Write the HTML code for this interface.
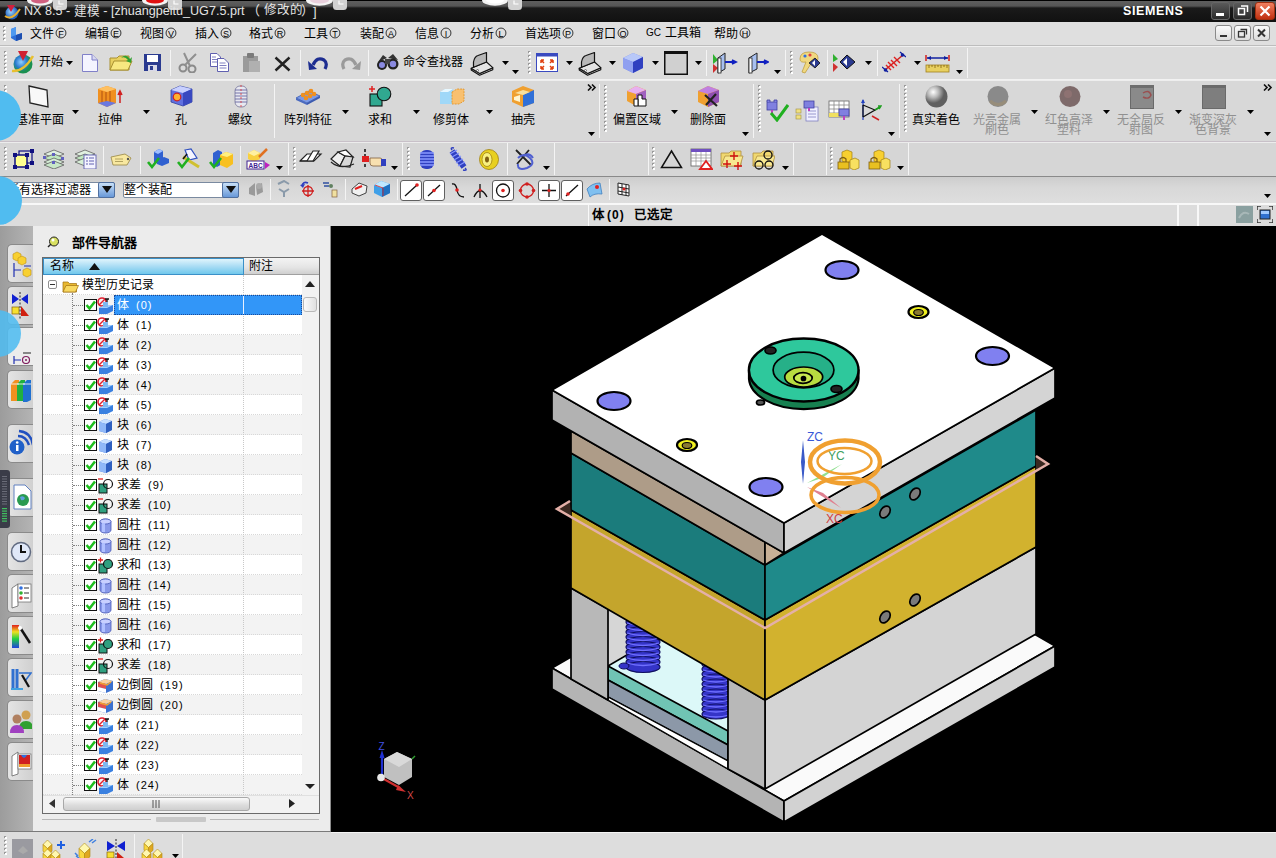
<!DOCTYPE html>
<html lang="zh-CN"><head><meta charset="utf-8"><style>
*{margin:0;padding:0;box-sizing:border-box}
html,body{width:1276px;height:858px;overflow:hidden;background:#d8d8d8;font-family:"Liberation Sans",sans-serif;font-size:12px;color:#000}
.a{position:absolute}
.t{white-space:nowrap;line-height:1}
</style></head><body>
<div class="a" style="left:0;top:0;width:1276px;height:22px;background:linear-gradient(#000 0,#000 1px,#5e5e5e 1px,#555 6px,#1a1a1a 8px,#111 100%)"></div>
<svg class="a" style="left:27px;top:0px" width="41" height="11" viewBox="0 0 41 11"><ellipse cx="13.0" cy="0" rx="13.0" ry="5.8" fill="#f4f4f4"/><ellipse cx="13.0" cy="0" rx="9.0" ry="3.6" fill="#d06080"/><rect x="26" y="-4" width="14" height="14" rx="3.5" fill="#d2d2d2"/><path d="M32,0.5 v3.5 h4.5" stroke="#fff" stroke-width="1.2" fill="none"/></svg>
<svg class="a" style="left:142px;top:0px" width="41" height="11" viewBox="0 0 41 11"><ellipse cx="13.0" cy="0" rx="13.0" ry="5.8" fill="#f4f4f4"/><ellipse cx="13.0" cy="0" rx="9.0" ry="3.6" fill="#e01010"/><rect x="26" y="-4" width="14" height="14" rx="3.5" fill="#d2d2d2"/><path d="M32,0.5 v3.5 h4.5" stroke="#fff" stroke-width="1.2" fill="none"/></svg>
<svg class="a" style="left:306px;top:0px" width="42" height="11" viewBox="0 0 42 11"><ellipse cx="13.5" cy="0" rx="13.5" ry="5.8" fill="#f4f4f4"/><ellipse cx="13.5" cy="0" rx="9.5" ry="3.6" fill="#e8d0dc"/><rect x="27" y="-4" width="14" height="14" rx="3.5" fill="#d2d2d2"/><path d="M33,0.5 v3.5 h4.5" stroke="#fff" stroke-width="1.2" fill="none"/></svg>
<svg class="a" style="left:482px;top:0px" width="41" height="11" viewBox="0 0 41 11"><ellipse cx="13.0" cy="0" rx="13.0" ry="5.8" fill="#f4f4f4"/><ellipse cx="13.0" cy="0" rx="9.0" ry="3.6" fill="#ffffff"/><rect x="26" y="-4" width="14" height="14" rx="3.5" fill="#d2d2d2"/><path d="M32,0.5 v3.5 h4.5" stroke="#fff" stroke-width="1.2" fill="none"/></svg>
<svg class="a" style="left:3px;top:3px" width="18" height="17" viewBox="0 0 18 17"><defs><radialGradient id="gnx" cx="40%" cy="40%"><stop offset="0" stop-color="#9fd8ff"/><stop offset="1" stop-color="#1d5fc0"/></radialGradient></defs><circle cx="9" cy="10" r="6.5" fill="url(#gnx)"/><path d="M2,13 Q9,18 17,6" stroke="#e8b030" stroke-width="2" fill="none"/><path d="M4,2 L12,2 L8,9 Z" fill="#d02040"/></svg>
<div class="a t" style="left:24px;top:5px;font-size:12.6px;color:#e4e4e4;">NX 8.5 - 建模 - [zhuangpeitu_UG7.5.prt</div>
<div class="a t" style="left:247px;top:4px;font-size:13px;color:#e4e4e4;">（</div>
<div class="a t" style="left:264px;top:4px;font-size:12.5px;color:#e4e4e4;">修改的</div>
<div class="a t" style="left:301px;top:4px;font-size:13px;color:#e4e4e4;">）</div>
<div class="a t" style="left:313px;top:5px;font-size:13px;color:#e4e4e4;">]</div>
<div class="a t" style="left:1123px;top:5px;font-size:12px;color:#ffffff;font-weight:bold;letter-spacing:0.6px;font-size:12.5px">SIEMENS</div>
<div class="a" style="left:1211px;top:2px;width:19px;height:18px;border-radius:3px;background:linear-gradient(#5a5a5a,#2a2a2a);border:1px solid #666"></div>
<div class="a" style="left:1216px;top:13px;width:8px;height:3px;background:#fff"></div>
<div class="a" style="left:1233px;top:2px;width:19px;height:18px;border-radius:3px;background:linear-gradient(#5a5a5a,#2a2a2a);border:1px solid #666"></div>
<svg class="a" style="left:1237px;top:5px" width="12" height="11" viewBox="0 0 12 11"><rect x="1.5" y="3.5" width="6" height="6" fill="none" stroke="#fff" stroke-width="1.5"/><path d="M4,1 H10.5 V7" fill="none" stroke="#fff" stroke-width="1.5"/></svg>
<div class="a" style="left:1255px;top:2px;width:20px;height:18px;border-radius:3px;background:linear-gradient(#f08060,#c03010);border:1px solid #a03010"></div>
<svg class="a" style="left:1259px;top:5px" width="12" height="12" viewBox="0 0 12 12"><path d="M1.5,1.5 L10.5,10.5 M10.5,1.5 L1.5,10.5" stroke="#fff" stroke-width="2.2"/></svg>
<div class="a" style="left:0;top:22px;width:1276px;height:24px;background:#dfdfdf;border-bottom:1px solid #bdbdbd"></div>
<svg class="a" style="left:3px;top:26px" width="3" height="16" viewBox="0 0 3 16"><rect x="0" y="0" width="2" height="2" fill="#9a9a9a"/><rect x="1" y="1" width="2" height="2" fill="#fff"/><rect x="0" y="4" width="2" height="2" fill="#9a9a9a"/><rect x="1" y="5" width="2" height="2" fill="#fff"/><rect x="0" y="8" width="2" height="2" fill="#9a9a9a"/><rect x="1" y="9" width="2" height="2" fill="#fff"/><rect x="0" y="12" width="2" height="2" fill="#9a9a9a"/><rect x="1" y="13" width="2" height="2" fill="#fff"/></svg>
<svg class="a" style="left:8px;top:25px" width="17" height="17" viewBox="0 0 17 17"><path d="M3,4 L8,2 L8,10 L14,8 L14,14 L8,16 L3,13 Z" fill="#2d6fd8"/><path d="M3,4 L8,2 L8,10 L3,12Z" fill="#4f9af0"/><path d="M8,10 L14,8 L14,14 L8,16Z" fill="#1d4fb0"/></svg>
<div class="a t" style="left:30px;top:27px;font-size:12px">文件<span style="font-size:10px;margin-left:1px;display:inline-block;border:1px solid #222;border-radius:6px;width:12px;height:12px;line-height:11px;text-align:center;vertical-align:1px;transform:scale(0.9)">F</span></div>
<div class="a t" style="left:85px;top:27px;font-size:12px">编辑<span style="font-size:10px;margin-left:1px;display:inline-block;border:1px solid #222;border-radius:6px;width:12px;height:12px;line-height:11px;text-align:center;vertical-align:1px;transform:scale(0.9)">E</span></div>
<div class="a t" style="left:140px;top:27px;font-size:12px">视图<span style="font-size:10px;margin-left:1px;display:inline-block;border:1px solid #222;border-radius:6px;width:12px;height:12px;line-height:11px;text-align:center;vertical-align:1px;transform:scale(0.9)">V</span></div>
<div class="a t" style="left:195px;top:27px;font-size:12px">插入<span style="font-size:10px;margin-left:1px;display:inline-block;border:1px solid #222;border-radius:6px;width:12px;height:12px;line-height:11px;text-align:center;vertical-align:1px;transform:scale(0.9)">S</span></div>
<div class="a t" style="left:249px;top:27px;font-size:12px">格式<span style="font-size:10px;margin-left:1px;display:inline-block;border:1px solid #222;border-radius:6px;width:12px;height:12px;line-height:11px;text-align:center;vertical-align:1px;transform:scale(0.9)">R</span></div>
<div class="a t" style="left:304px;top:27px;font-size:12px">工具<span style="font-size:10px;margin-left:1px;display:inline-block;border:1px solid #222;border-radius:6px;width:12px;height:12px;line-height:11px;text-align:center;vertical-align:1px;transform:scale(0.9)">T</span></div>
<div class="a t" style="left:360px;top:27px;font-size:12px">装配<span style="font-size:10px;margin-left:1px;display:inline-block;border:1px solid #222;border-radius:6px;width:12px;height:12px;line-height:11px;text-align:center;vertical-align:1px;transform:scale(0.9)">A</span></div>
<div class="a t" style="left:415px;top:27px;font-size:12px">信息<span style="font-size:10px;margin-left:1px;display:inline-block;border:1px solid #222;border-radius:6px;width:12px;height:12px;line-height:11px;text-align:center;vertical-align:1px;transform:scale(0.9)">I</span></div>
<div class="a t" style="left:470px;top:27px;font-size:12px">分析<span style="font-size:10px;margin-left:1px;display:inline-block;border:1px solid #222;border-radius:6px;width:12px;height:12px;line-height:11px;text-align:center;vertical-align:1px;transform:scale(0.9)">L</span></div>
<div class="a t" style="left:525px;top:27px;font-size:12px">首选项<span style="font-size:10px;margin-left:1px;display:inline-block;border:1px solid #222;border-radius:6px;width:12px;height:12px;line-height:11px;text-align:center;vertical-align:1px;transform:scale(0.9)">P</span></div>
<div class="a t" style="left:592px;top:27px;font-size:12px">窗口<span style="font-size:10px;margin-left:1px;display:inline-block;border:1px solid #222;border-radius:6px;width:12px;height:12px;line-height:11px;text-align:center;vertical-align:1px;transform:scale(0.9)">O</span></div>
<div class="a t" style="left:646px;top:28px;font-size:10px;color:#000;">GC</div>
<div class="a t" style="left:665px;top:27px;font-size:12px;color:#000;">工具箱</div>
<div class="a t" style="left:714px;top:27px;font-size:12px">帮助<span style="font-size:10px;margin-left:1px;display:inline-block;border:1px solid #222;border-radius:6px;width:12px;height:12px;line-height:11px;text-align:center;vertical-align:1px;transform:scale(0.9)">H</span></div>
<div class="a" style="left:1215px;top:25px;width:17px;height:16px;border-radius:3px;background:linear-gradient(#fbfbfb,#dcdcdc);border:1px solid #8a8a8a"></div>
<div class="a" style="left:1234px;top:25px;width:17px;height:16px;border-radius:3px;background:linear-gradient(#fbfbfb,#dcdcdc);border:1px solid #8a8a8a"></div>
<div class="a" style="left:1253px;top:25px;width:17px;height:16px;border-radius:3px;background:linear-gradient(#fbfbfb,#dcdcdc);border:1px solid #8a8a8a"></div>
<svg class="a" style="left:1218px;top:28px" width="12" height="11" viewBox="0 0 12 11"><rect x="2" y="7" width="7" height="2" fill="#333"/></svg>
<svg class="a" style="left:1237px;top:28px" width="12" height="11" viewBox="0 0 12 11"><rect x="1.5" y="3.5" width="6" height="5.5" fill="none" stroke="#333" stroke-width="1.3"/><path d="M3.5,1.5 H9.5 V6.5" fill="none" stroke="#333" stroke-width="1.3"/></svg>
<svg class="a" style="left:1256px;top:28px" width="12" height="11" viewBox="0 0 12 11"><path d="M2,1.5 L9,8.5 M9,1.5 L2,8.5" stroke="#333" stroke-width="2"/></svg>
<div class="a" style="left:0;top:46px;width:1276px;height:34px;background:#dbdbdb;border-top:1px solid #f0f0f0;border-bottom:1px solid #f2f2f2"></div>
<svg class="a" style="left:4px;top:51px" width="3" height="26" viewBox="0 0 3 26"><rect x="0" y="0" width="2" height="2" fill="#9a9a9a"/><rect x="1" y="1" width="2" height="2" fill="#fff"/><rect x="0" y="4" width="2" height="2" fill="#9a9a9a"/><rect x="1" y="5" width="2" height="2" fill="#fff"/><rect x="0" y="8" width="2" height="2" fill="#9a9a9a"/><rect x="1" y="9" width="2" height="2" fill="#fff"/><rect x="0" y="12" width="2" height="2" fill="#9a9a9a"/><rect x="1" y="13" width="2" height="2" fill="#fff"/><rect x="0" y="16" width="2" height="2" fill="#9a9a9a"/><rect x="1" y="17" width="2" height="2" fill="#fff"/><rect x="0" y="20" width="2" height="2" fill="#9a9a9a"/><rect x="1" y="21" width="2" height="2" fill="#fff"/></svg>
<svg class="a" style="left:10px;top:50px" width="25" height="25" viewBox="0 0 25 25"><defs><radialGradient id="gg" cx="40%" cy="40%"><stop offset="0" stop-color="#8fd0ff"/><stop offset=".6" stop-color="#2a7ad0"/><stop offset="1" stop-color="#1a9050"/></radialGradient></defs><circle cx="13" cy="14" r="9.5" fill="url(#gg)"/><path d="M2,21 Q14,22 23,6" stroke="#e8c030" stroke-width="2.5" fill="none"/><path d="M8,1 L18,1 L13,11 Z" fill="#d02030"/></svg>
<div class="a t" style="left:39px;top:56px;font-size:12px;color:#000;">开始</div>
<svg class="a" style="left:66px;top:61px" width="7" height="4" viewBox="0 0 7 4"><path d="M0,0 L7,0 L3.5,4 Z" fill="#000"/></svg>
<svg class="a" style="left:81px;top:53px" width="18" height="20" viewBox="0 0 18 20"><path d="M1.5,1.5 H11 L16.5,7 V18.5 H1.5 Z" fill="#f4f4ff" stroke="#8080c8"/><path d="M11,1.5 V7 H16.5" fill="#d8d8f0" stroke="#8080c8"/></svg>
<svg class="a" style="left:109px;top:52px" width="24" height="21" viewBox="0 0 24 21"><path d="M1,6 H8 L10,4 H20 V18 H1 Z" fill="#e8d060" stroke="#a89030"/><path d="M1,18 L5,9 H23 L19,18 Z" fill="#f8e880" stroke="#a89030"/><path d="M12,6 Q17,1 21,7 L23,5 L22,11 L17,9 L19,8 Q16,4 12,6Z" fill="#30a030"/></svg>
<svg class="a" style="left:143px;top:53px" width="19" height="19" viewBox="0 0 19 19"><rect x="1" y="1" width="17" height="17" fill="#2a3a90"/><rect x="4" y="2" width="11" height="7" fill="#fff"/><rect x="5" y="12" width="9" height="6" fill="#d8d8e8"/><rect x="7" y="13" width="3" height="4" fill="#2a3a90"/></svg>
<div class="a" style="left:170px;top:50px;width:1px;height:26px;background:#b0b0b0;border-right:1px solid #f4f4f4"></div>
<svg class="a" style="left:178px;top:52px" width="23" height="21" viewBox="0 0 23 21"><circle cx="5" cy="16" r="3.5" fill="none" stroke="#8a8a8a" stroke-width="2"/><circle cx="14" cy="17" r="3.5" fill="none" stroke="#8a8a8a" stroke-width="2"/><path d="M7,13 L18,2 M12,14 L6,1" stroke="#909090" stroke-width="2"/></svg>
<svg class="a" style="left:209px;top:52px" width="22" height="21" viewBox="0 0 22 21"><path d="M1.5,1.5 H8 L11.5,5 V14.5 H1.5Z" fill="#fff" stroke="#6060b0"/><path d="M8.5,6.5 H15 L19.5,11 V19.5 H8.5Z" fill="#fff" stroke="#6060b0"/><path d="M10.5,11 h6 M10.5,13.5 h7 M10.5,16 h7 M3,5 h4 M3,7.5 h5 M3,10 h5" stroke="#6060b0" stroke-width="0.8"/></svg>
<svg class="a" style="left:241px;top:52px" width="21" height="21" viewBox="0 0 21 21"><rect x="2" y="4" width="15" height="16" fill="#9a9a9a"/><rect x="6" y="1" width="7" height="5" rx="1" fill="#7a7a7a"/><rect x="8" y="9" width="11" height="11" fill="#b0b0b0"/></svg>
<svg class="a" style="left:274px;top:56px" width="17" height="16" viewBox="0 0 17 16"><path d="M1.5,1.5 L15.5,14.5 M15.5,1.5 L1.5,14.5" stroke="#222" stroke-width="2.4"/></svg>
<div class="a" style="left:300px;top:50px;width:1px;height:26px;background:#b0b0b0;border-right:1px solid #f4f4f4"></div>
<svg class="a" style="left:308px;top:56px" width="21" height="15" viewBox="0 0 21 15"><path d="M5,9 Q9,0 16,4 Q20,7 17,13" stroke="#1d2d90" stroke-width="3.2" fill="none"/><path d="M0,5 L9,13 L1,14 Z" fill="#1d2d90"/></svg>
<svg class="a" style="left:340px;top:56px" width="21" height="15" viewBox="0 0 21 15"><path d="M16,9 Q12,0 5,4 Q1,7 4,13" stroke="#9a9a9a" stroke-width="3.2" fill="none"/><path d="M21,5 L12,13 L20,14 Z" fill="#9a9a9a"/></svg>
<div class="a" style="left:368px;top:50px;width:1px;height:26px;background:#b0b0b0;border-right:1px solid #f4f4f4"></div>
<svg class="a" style="left:376px;top:52px" width="23" height="20" viewBox="0 0 23 20"><path d="M2,10 L7,3 L11,6 Z M12,6 L17,2 L22,8" fill="#333"/><circle cx="6" cy="13" r="5" fill="#222"/><circle cx="17" cy="12" r="5.5" fill="#222"/><circle cx="6" cy="13" r="3" fill="#8a8ae0"/><circle cx="17" cy="12" r="3.2" fill="#8a8ae0"/><rect x="9" y="7" width="5" height="5" fill="#444"/></svg>
<div class="a t" style="left:403px;top:56px;font-size:12px;color:#000;">命令查找器</div>
<svg class="a" style="left:470px;top:51px" width="25" height="25" viewBox="0 0 25 25"><path d="M1.2,17.2 L9.6,22.4 L22.8,16.7 L22.8,18.7 L9.6,24.2 L1.2,19 Z" fill="#c8c8c8" stroke="#111" stroke-width="1.1" stroke-linejoin="round"/><path d="M1.2,17.2 L3.5,16.3 L16.5,11 L22.8,16.7 L9.6,22.4 Z" fill="#e4e4e4" stroke="#111" stroke-width="1.1" stroke-linejoin="round"/><path d="M16.5,1.5 L16.5,11 L3.5,16.3 L3.5,11 Q4.5,5.5 8,4.5 Z" fill="#b8b8b8" stroke="#111" stroke-width="1.2" stroke-linejoin="round"/><circle cx="7.5" cy="19.5" r="1" fill="#fff" stroke="#333" stroke-width="0.6"/></svg>
<svg class="a" style="left:502px;top:61px" width="7" height="4" viewBox="0 0 7 4"><path d="M0,0 L7,0 L3.5,4 Z" fill="#000"/></svg>
<svg class="a" style="left:512px;top:70px" width="7" height="4" viewBox="0 0 7 4"><path d="M0,0 L7,0 L3.5,4 Z" fill="#000"/></svg>
<svg class="a" style="left:528px;top:51px" width="3" height="26" viewBox="0 0 3 26"><rect x="0" y="0" width="2" height="2" fill="#9a9a9a"/><rect x="1" y="1" width="2" height="2" fill="#fff"/><rect x="0" y="4" width="2" height="2" fill="#9a9a9a"/><rect x="1" y="5" width="2" height="2" fill="#fff"/><rect x="0" y="8" width="2" height="2" fill="#9a9a9a"/><rect x="1" y="9" width="2" height="2" fill="#fff"/><rect x="0" y="12" width="2" height="2" fill="#9a9a9a"/><rect x="1" y="13" width="2" height="2" fill="#fff"/><rect x="0" y="16" width="2" height="2" fill="#9a9a9a"/><rect x="1" y="17" width="2" height="2" fill="#fff"/><rect x="0" y="20" width="2" height="2" fill="#9a9a9a"/><rect x="1" y="21" width="2" height="2" fill="#fff"/></svg>
<svg class="a" style="left:536px;top:53px" width="22" height="19" viewBox="0 0 22 19"><rect x="0.5" y="0.5" width="21" height="18" fill="#fff" stroke="#3a4ac0"/><rect x="0.5" y="0.5" width="21" height="3" fill="#3a4ac0"/><path d="M5,7 l3,3 M5,7 v3 M5,7 h3 M17,7 l-3,3 M17,7 v3 M17,7 h-3 M5,16 l3,-3 M5,16 v-3 M5,16 h3 M17,16 l-3,-3 M17,16 v-3 M17,16 h-3" stroke="#e04010" stroke-width="1.5"/></svg>
<svg class="a" style="left:566px;top:61px" width="7" height="4" viewBox="0 0 7 4"><path d="M0,0 L7,0 L3.5,4 Z" fill="#000"/></svg>
<svg class="a" style="left:578px;top:51px" width="25" height="25" viewBox="0 0 25 25"><path d="M1.2,17.2 L9.6,22.4 L22.8,16.7 L22.8,18.7 L9.6,24.2 L1.2,19 Z" fill="#c8c8c8" stroke="#111" stroke-width="1.1" stroke-linejoin="round"/><path d="M1.2,17.2 L3.5,16.3 L16.5,11 L22.8,16.7 L9.6,22.4 Z" fill="#e4e4e4" stroke="#111" stroke-width="1.1" stroke-linejoin="round"/><path d="M16.5,1.5 L16.5,11 L3.5,16.3 L3.5,11 Q4.5,5.5 8,4.5 Z" fill="#b8b8b8" stroke="#111" stroke-width="1.2" stroke-linejoin="round"/><circle cx="7.5" cy="19.5" r="1" fill="#fff" stroke="#333" stroke-width="0.6"/></svg>
<svg class="a" style="left:609px;top:61px" width="7" height="4" viewBox="0 0 7 4"><path d="M0,0 L7,0 L3.5,4 Z" fill="#000"/></svg>
<svg class="a" style="left:621px;top:52px" width="24" height="22" viewBox="0 0 24 22"><path d="M2,6 L12,1 L22,5 L22,16 L12,21 L2,16Z" fill="#7a8ae8"/><path d="M2,6 L12,1 L22,5 L12,10Z" fill="#b8c8f8"/><path d="M12,10 L22,5 L22,16 L12,21Z" fill="#3040c0"/><path d="M2,6 L12,10 L12,21 L2,16Z" fill="#90a0f0"/></svg>
<svg class="a" style="left:652px;top:61px" width="7" height="4" viewBox="0 0 7 4"><path d="M0,0 L7,0 L3.5,4 Z" fill="#000"/></svg>
<svg class="a" style="left:664px;top:51px" width="24" height="24" viewBox="0 0 24 24"><rect x="0.75" y="0.75" width="22.5" height="22.5" fill="#d0d0d0" stroke="#111" stroke-width="1.5"/><rect x="0" y="0" width="24" height="3" fill="#111"/></svg>
<svg class="a" style="left:695px;top:61px" width="7" height="4" viewBox="0 0 7 4"><path d="M0,0 L7,0 L3.5,4 Z" fill="#000"/></svg>
<div class="a" style="left:706px;top:50px;width:1px;height:26px;background:#b0b0b0;border-right:1px solid #f4f4f4"></div>
<svg class="a" style="left:712px;top:52px" width="26" height="22" viewBox="0 0 26 22"><path d="M1,2 L6,8 L1,12Z" fill="#30b030"/><path d="M1,12 L6,16 L1,21Z" fill="#d03030"/><path d="M6,6 L13,1 L13,17 L6,21Z" fill="#a8c0f0" stroke="#222" stroke-width="1"/><rect x="6" y="6" width="3" height="15" fill="#fff" stroke="#222" stroke-width="0.8"/><path d="M13,10 H22 M20,8 L24,10 L20,12" stroke="#1020c0" stroke-width="1.8" fill="#1020c0"/></svg>
<svg class="a" style="left:747px;top:52px" width="22" height="22" viewBox="0 0 22 22"><path d="M2,6 L10,1 L10,17 L2,21Z" fill="#a8c0f0" stroke="#222" stroke-width="1"/><rect x="2" y="6" width="3" height="15" fill="#fff" stroke="#222" stroke-width="0.8"/><path d="M10,10 H19 M17,8 L21,10 L17,12" stroke="#1020c0" stroke-width="1.8" fill="#1020c0"/></svg>
<svg class="a" style="left:774px;top:70px" width="7" height="4" viewBox="0 0 7 4"><path d="M0,0 L7,0 L3.5,4 Z" fill="#000"/></svg>
<div class="a" style="left:785px;top:50px;width:1px;height:26px;background:#b0b0b0;border-right:1px solid #f4f4f4"></div>
<svg class="a" style="left:790px;top:51px" width="3" height="26" viewBox="0 0 3 26"><rect x="0" y="0" width="2" height="2" fill="#9a9a9a"/><rect x="1" y="1" width="2" height="2" fill="#fff"/><rect x="0" y="4" width="2" height="2" fill="#9a9a9a"/><rect x="1" y="5" width="2" height="2" fill="#fff"/><rect x="0" y="8" width="2" height="2" fill="#9a9a9a"/><rect x="1" y="9" width="2" height="2" fill="#fff"/><rect x="0" y="12" width="2" height="2" fill="#9a9a9a"/><rect x="1" y="13" width="2" height="2" fill="#fff"/><rect x="0" y="16" width="2" height="2" fill="#9a9a9a"/><rect x="1" y="17" width="2" height="2" fill="#fff"/><rect x="0" y="20" width="2" height="2" fill="#9a9a9a"/><rect x="1" y="21" width="2" height="2" fill="#fff"/></svg>
<svg class="a" style="left:797px;top:51px" width="23" height="23" viewBox="0 0 23 23"><path d="M3,8 Q3,1 12,1 Q21,1 21,7 Q21,12 15,11 L8,22 L5,21 L9,11 Q3,12 3,8Z" fill="#f0d880" stroke="#c0a040" stroke-width="0.8"/><circle cx="8" cy="5" r="1.6" fill="#3070e0"/><circle cx="13" cy="4" r="1.6" fill="#e04040"/><path d="M12,12 L18,7 L23,12 L18,17Z" fill="#2a3a90" stroke="#111" stroke-width="0.8"/><path d="M15,12 L18,9 L18,15Z" fill="#fff"/></svg>
<div class="a" style="left:827px;top:50px;width:1px;height:26px;background:#b0b0b0;border-right:1px solid #f4f4f4"></div>
<svg class="a" style="left:832px;top:53px" width="26" height="19" viewBox="0 0 26 19"><path d="M1,1 L6,6 L1,9Z" fill="#30b030"/><path d="M1,10 L6,14 L1,19Z" fill="#d03030"/><path d="M8,9 L15,2 L23,9 L15,16Z" fill="#2a3a90" stroke="#111"/><path d="M11,9 L15,5 L15,13Z" fill="#fff"/></svg>
<svg class="a" style="left:865px;top:61px" width="7" height="4" viewBox="0 0 7 4"><path d="M0,0 L7,0 L3.5,4 Z" fill="#000"/></svg>
<div class="a" style="left:877px;top:50px;width:1px;height:26px;background:#b0b0b0;border-right:1px solid #f4f4f4"></div>
<svg class="a" style="left:882px;top:51px" width="24" height="23" viewBox="0 0 24 23"><path d="M3,19 L21,4" stroke="#d02020" stroke-width="1.5"/><path d="M6,11 l6,6 M9,9 l6,6 M12,6 l6,6 M4,14 l5,5" stroke="#e02020" stroke-width="1.4"/><path d="M0,16 L6,21 M18,1 L24,6" stroke="#1020a0" stroke-width="1.3"/><circle cx="3.5" cy="19" r="1.8" fill="#1020a0"/><circle cx="20.5" cy="4" r="1.8" fill="#1020a0"/></svg>
<svg class="a" style="left:914px;top:61px" width="7" height="4" viewBox="0 0 7 4"><path d="M0,0 L7,0 L3.5,4 Z" fill="#000"/></svg>
<svg class="a" style="left:925px;top:52px" width="25" height="22" viewBox="0 0 25 22"><path d="M1,3 V9 M24,3 V9" stroke="#d02020" stroke-width="1.5"/><path d="M2,6 H23" stroke="#1020a0" stroke-width="1.5"/><path d="M2,6 L6,4 V8Z M23,6 L19,4 V8Z" fill="#1020a0"/><rect x="1" y="13" width="23" height="7" fill="#e8d060" stroke="#a08020" stroke-width="0.8"/><path d="M4,13 v3 M7,13 v2 M10,13 v3 M13,13 v2 M16,13 v3 M19,13 v2 M22,13 v3" stroke="#806010" stroke-width="0.8"/></svg>
<svg class="a" style="left:956px;top:70px" width="7" height="4" viewBox="0 0 7 4"><path d="M0,0 L7,0 L3.5,4 Z" fill="#000"/></svg>
<div class="a" style="left:967px;top:48px;width:1px;height:30px;background:#b0b0b0;border-right:1px solid #f4f4f4"></div>
<div class="a" style="left:0;top:80px;width:1276px;height:62px;background:#d8d8d8;border-top:1px solid #eeeeee;border-bottom:1px solid #c8c0c8"></div>
<svg class="a" style="left:4px;top:85px" width="3" height="52" viewBox="0 0 3 52"><rect x="0" y="0" width="2" height="2" fill="#9a9a9a"/><rect x="1" y="1" width="2" height="2" fill="#fff"/><rect x="0" y="4" width="2" height="2" fill="#9a9a9a"/><rect x="1" y="5" width="2" height="2" fill="#fff"/><rect x="0" y="8" width="2" height="2" fill="#9a9a9a"/><rect x="1" y="9" width="2" height="2" fill="#fff"/><rect x="0" y="12" width="2" height="2" fill="#9a9a9a"/><rect x="1" y="13" width="2" height="2" fill="#fff"/><rect x="0" y="16" width="2" height="2" fill="#9a9a9a"/><rect x="1" y="17" width="2" height="2" fill="#fff"/><rect x="0" y="20" width="2" height="2" fill="#9a9a9a"/><rect x="1" y="21" width="2" height="2" fill="#fff"/><rect x="0" y="24" width="2" height="2" fill="#9a9a9a"/><rect x="1" y="25" width="2" height="2" fill="#fff"/><rect x="0" y="28" width="2" height="2" fill="#9a9a9a"/><rect x="1" y="29" width="2" height="2" fill="#fff"/><rect x="0" y="32" width="2" height="2" fill="#9a9a9a"/><rect x="1" y="33" width="2" height="2" fill="#fff"/><rect x="0" y="36" width="2" height="2" fill="#9a9a9a"/><rect x="1" y="37" width="2" height="2" fill="#fff"/><rect x="0" y="40" width="2" height="2" fill="#9a9a9a"/><rect x="1" y="41" width="2" height="2" fill="#fff"/><rect x="0" y="44" width="2" height="2" fill="#9a9a9a"/><rect x="1" y="45" width="2" height="2" fill="#fff"/><rect x="0" y="48" width="2" height="2" fill="#9a9a9a"/><rect x="1" y="49" width="2" height="2" fill="#fff"/></svg>
<svg class="a" style="left:28px;top:85px" width="21" height="23" viewBox="0 0 21 23"><path d="M1,1 L19,5 L20,22 L2,18Z" fill="#f8f8f8" stroke="#222" stroke-width="1.3"/></svg>
<div class="a t" style="left:-20px;top:114px;width:120px;text-align:center;font-size:12px;color:#000">基准平面</div>
<svg class="a" style="left:72px;top:110px" width="7" height="4" viewBox="0 0 7 4"><path d="M0,0 L7,0 L3.5,4 Z" fill="#000"/></svg>
<svg class="a" style="left:97px;top:85px" width="27" height="23" viewBox="0 0 27 23"><path d="M1,4 L10,1 L19,4 L19,18 L10,22 L1,18Z" fill="#f09020"/><path d="M1,4 L10,1 L19,4 L10,7Z" fill="#ffc060"/><path d="M5,6 V19 M9,7 V21 M13,6 V20" stroke="#b05010" stroke-width="1"/><path d="M1,18 L10,22 L19,18 L10,16Z" fill="#6a78e0"/><path d="M23,18 V8 M21,10 L23,6 L25,10" stroke="#d02020" stroke-width="1.5" fill="#d02020"/></svg>
<div class="a t" style="left:50px;top:114px;width:120px;text-align:center;font-size:12px;color:#000">拉伸</div>
<svg class="a" style="left:143px;top:110px" width="7" height="4" viewBox="0 0 7 4"><path d="M0,0 L7,0 L3.5,4 Z" fill="#000"/></svg>
<svg class="a" style="left:170px;top:85px" width="23" height="22" viewBox="0 0 23 22"><path d="M1,5 L10,1 L22,4 L22,17 L13,21 L1,17Z" fill="#6070e0" stroke="#3040a0" stroke-width="0.8"/><path d="M1,5 L10,1 L22,4 L13,8Z" fill="#c8d0ff"/><path d="M13,8 L22,4 L22,17 L13,21Z" fill="#3848c0"/><circle cx="7" cy="12" r="3.8" fill="#ffb030" stroke="#d02020" stroke-width="1.2"/></svg>
<div class="a t" style="left:121px;top:114px;width:120px;text-align:center;font-size:12px;color:#000">孔</div>
<svg class="a" style="left:233px;top:84px" width="16" height="25" viewBox="0 0 16 25"><rect x="2" y="2" width="12" height="21" rx="5" fill="#e8e8f0" stroke="#8a8aa8"/><path d="M2,6 h12 M2,9 h12 M2,12 h12 M2,15 h12 M2,18 h12" stroke="#6a6aa0" stroke-width="0.9"/><path d="M8,1 V24" stroke="#e03030" stroke-width="0.8" stroke-dasharray="2,2"/></svg>
<div class="a t" style="left:180px;top:114px;width:120px;text-align:center;font-size:12px;color:#000">螺纹</div>
<div class="a" style="left:274px;top:84px;width:1px;height:54px;background:#b0b0b0;border-right:1px solid #f4f4f4"></div>
<svg class="a" style="left:295px;top:86px" width="26" height="20" viewBox="0 0 26 20"><path d="M1,12 L14,5 L25,10 L12,17Z" fill="#7a9ae8" stroke="#3a5ab0" stroke-width="0.8"/><path d="M1,12 L12,17 V19 L1,14Z" fill="#4a6ac0"/><path d="M12,17 L25,10 V12 L12,19Z" fill="#3a5ab0"/><g fill="#f09020"><circle cx="8" cy="9" r="2.3"/><circle cx="12" cy="7" r="2.3"/><circle cx="16" cy="5" r="2.3"/><circle cx="11" cy="12" r="2.3"/><circle cx="15" cy="10" r="2.3"/><circle cx="19" cy="8" r="2.3"/></g></svg>
<div class="a t" style="left:248px;top:114px;width:120px;text-align:center;font-size:12px;color:#000">阵列特征</div>
<svg class="a" style="left:342px;top:110px" width="7" height="4" viewBox="0 0 7 4"><path d="M0,0 L7,0 L3.5,4 Z" fill="#000"/></svg>
<svg class="a" style="left:368px;top:85px" width="25" height="23" viewBox="0 0 25 23"><path d="M1,4 h6 M4,1 v6" stroke="#e02020" stroke-width="1.5"/><rect x="2" y="9" width="12" height="12" fill="#30a890" stroke="#111" stroke-width="1.1"/><circle cx="16" cy="9" r="6.8" fill="#30a890" stroke="#111" stroke-width="1.1"/></svg>
<div class="a t" style="left:320px;top:114px;width:120px;text-align:center;font-size:12px;color:#000">求和</div>
<svg class="a" style="left:413px;top:110px" width="7" height="4" viewBox="0 0 7 4"><path d="M0,0 L7,0 L3.5,4 Z" fill="#000"/></svg>
<svg class="a" style="left:439px;top:88px" width="26" height="17" viewBox="0 0 26 17"><path d="M1,4 L6,1 L14,1 L14,16 L1,16Z" fill="#a0d8f8"/><path d="M1,4 L6,1 L14,1 L9,4Z" fill="#e8f8ff"/><path d="M13,4 L18,1 L25,1 L25,13 L20,16 L13,16Z" fill="#f8c070" stroke="#e09020" stroke-width="0.8" stroke-dasharray="2,1"/></svg>
<div class="a t" style="left:391px;top:114px;width:120px;text-align:center;font-size:12px;color:#000">修剪体</div>
<svg class="a" style="left:486px;top:110px" width="7" height="4" viewBox="0 0 7 4"><path d="M0,0 L7,0 L3.5,4 Z" fill="#000"/></svg>
<svg class="a" style="left:511px;top:85px" width="24" height="23" viewBox="0 0 24 23"><path d="M1,6 L12,1 L23,5 L23,18 L12,22 L1,17Z" fill="#f0a030"/><path d="M12,10 L23,5 L23,18 L12,22Z" fill="#3070d8"/><path d="M4,8 L12,5 L19,7 L12,10Z" fill="#f8e0a0"/><path d="M3,12 L9,10 L9,17 L3,15Z" fill="#fff5d0"/></svg>
<div class="a t" style="left:463px;top:114px;width:120px;text-align:center;font-size:12px;color:#000">抽壳</div>
<svg class="a" style="left:587px;top:84px" width="10" height="7" viewBox="0 0 10 7"><path d="M1,0.5 L4,3.5 L1,6.5 M5,0.5 L8,3.5 L5,6.5" stroke="#111" stroke-width="1.6" fill="none"/></svg>
<svg class="a" style="left:588px;top:132px" width="7" height="4" viewBox="0 0 7 4"><path d="M0,0 L7,0 L3.5,4 Z" fill="#000"/></svg>
<div class="a" style="left:599px;top:84px;width:1px;height:54px;background:#b0b0b0;border-right:1px solid #f4f4f4"></div>
<svg class="a" style="left:604px;top:85px" width="3" height="50" viewBox="0 0 3 50"><rect x="0" y="0" width="2" height="2" fill="#9a9a9a"/><rect x="1" y="1" width="2" height="2" fill="#fff"/><rect x="0" y="4" width="2" height="2" fill="#9a9a9a"/><rect x="1" y="5" width="2" height="2" fill="#fff"/><rect x="0" y="8" width="2" height="2" fill="#9a9a9a"/><rect x="1" y="9" width="2" height="2" fill="#fff"/><rect x="0" y="12" width="2" height="2" fill="#9a9a9a"/><rect x="1" y="13" width="2" height="2" fill="#fff"/><rect x="0" y="16" width="2" height="2" fill="#9a9a9a"/><rect x="1" y="17" width="2" height="2" fill="#fff"/><rect x="0" y="20" width="2" height="2" fill="#9a9a9a"/><rect x="1" y="21" width="2" height="2" fill="#fff"/><rect x="0" y="24" width="2" height="2" fill="#9a9a9a"/><rect x="1" y="25" width="2" height="2" fill="#fff"/><rect x="0" y="28" width="2" height="2" fill="#9a9a9a"/><rect x="1" y="29" width="2" height="2" fill="#fff"/><rect x="0" y="32" width="2" height="2" fill="#9a9a9a"/><rect x="1" y="33" width="2" height="2" fill="#fff"/><rect x="0" y="36" width="2" height="2" fill="#9a9a9a"/><rect x="1" y="37" width="2" height="2" fill="#fff"/><rect x="0" y="40" width="2" height="2" fill="#9a9a9a"/><rect x="1" y="41" width="2" height="2" fill="#fff"/><rect x="0" y="44" width="2" height="2" fill="#9a9a9a"/><rect x="1" y="45" width="2" height="2" fill="#fff"/></svg>
<svg class="a" style="left:626px;top:85px" width="25" height="23" viewBox="0 0 25 23"><path d="M1,6 L10,1 L20,5 L20,16 L10,21 L1,16Z" fill="#f0a030"/><path d="M1,6 L10,1 L20,5 L10,9Z" fill="#e8b0f0"/><path d="M10,9 L20,5 L20,16 L10,21Z" fill="#a060c0"/><path d="M12,10 L16,10 L16,14 L20,14 L20,21 L12,21Z" fill="#fff" stroke="#111" stroke-width="1"/><path d="M8,14 h4 v7 h-4z" fill="#fff" stroke="#111" stroke-width="1"/></svg>
<div class="a t" style="left:577px;top:114px;width:120px;text-align:center;font-size:12px;color:#000">偏置区域</div>
<svg class="a" style="left:671px;top:110px" width="7" height="4" viewBox="0 0 7 4"><path d="M0,0 L7,0 L3.5,4 Z" fill="#000"/></svg>
<svg class="a" style="left:697px;top:85px" width="24" height="23" viewBox="0 0 24 23"><path d="M1,6 L11,1 L22,5 L22,17 L11,22 L1,17Z" fill="#f0a030"/><path d="M1,6 L11,1 L22,5 L11,9Z" fill="#c080e0"/><path d="M11,9 L22,5 L22,17 L11,22Z" fill="#9050b0"/><path d="M8,10 L20,21 M19,9 L9,20" stroke="#222" stroke-width="2.2"/></svg>
<div class="a t" style="left:648px;top:114px;width:120px;text-align:center;font-size:12px;color:#000">删除面</div>
<svg class="a" style="left:742px;top:132px" width="7" height="4" viewBox="0 0 7 4"><path d="M0,0 L7,0 L3.5,4 Z" fill="#000"/></svg>
<div class="a" style="left:753px;top:84px;width:1px;height:54px;background:#b0b0b0;border-right:1px solid #f4f4f4"></div>
<svg class="a" style="left:758px;top:85px" width="3" height="50" viewBox="0 0 3 50"><rect x="0" y="0" width="2" height="2" fill="#9a9a9a"/><rect x="1" y="1" width="2" height="2" fill="#fff"/><rect x="0" y="4" width="2" height="2" fill="#9a9a9a"/><rect x="1" y="5" width="2" height="2" fill="#fff"/><rect x="0" y="8" width="2" height="2" fill="#9a9a9a"/><rect x="1" y="9" width="2" height="2" fill="#fff"/><rect x="0" y="12" width="2" height="2" fill="#9a9a9a"/><rect x="1" y="13" width="2" height="2" fill="#fff"/><rect x="0" y="16" width="2" height="2" fill="#9a9a9a"/><rect x="1" y="17" width="2" height="2" fill="#fff"/><rect x="0" y="20" width="2" height="2" fill="#9a9a9a"/><rect x="1" y="21" width="2" height="2" fill="#fff"/><rect x="0" y="24" width="2" height="2" fill="#9a9a9a"/><rect x="1" y="25" width="2" height="2" fill="#fff"/><rect x="0" y="28" width="2" height="2" fill="#9a9a9a"/><rect x="1" y="29" width="2" height="2" fill="#fff"/><rect x="0" y="32" width="2" height="2" fill="#9a9a9a"/><rect x="1" y="33" width="2" height="2" fill="#fff"/><rect x="0" y="36" width="2" height="2" fill="#9a9a9a"/><rect x="1" y="37" width="2" height="2" fill="#fff"/><rect x="0" y="40" width="2" height="2" fill="#9a9a9a"/><rect x="1" y="41" width="2" height="2" fill="#fff"/><rect x="0" y="44" width="2" height="2" fill="#9a9a9a"/><rect x="1" y="45" width="2" height="2" fill="#fff"/></svg>
<svg class="a" style="left:765px;top:99px" width="24" height="23" viewBox="0 0 24 23"><rect x="2" y="3" width="10" height="8" fill="#8080e0" stroke="#4040a0" stroke-width="0.8"/><path d="M2,3 v-2 h3 v2 M9,3 v-2 h3 v2" fill="#8080e0" stroke="#4040a0" stroke-width="0.8"/><path d="M7,11 v4" stroke="#c040c0" stroke-width="2"/><path d="M6,14 L12,21 L23,6" stroke="#20b020" stroke-width="3" fill="none"/></svg>
<svg class="a" style="left:795px;top:99px" width="25" height="23" viewBox="0 0 25 23"><rect x="11" y="8" width="12" height="14" fill="#f0f0ff" stroke="#8080c0" stroke-width="0.8"/><path d="M13,12 h8 M13,15 h8 M13,18 h8" stroke="#8080c0" stroke-width="0.8"/><rect x="1" y="10" width="5" height="4" fill="#f0e080" stroke="#a09040" stroke-width="0.6"/><rect x="1" y="16" width="5" height="4" fill="#f0e080" stroke="#a09040" stroke-width="0.6"/><rect x="9" y="2" width="10" height="7" fill="#8080e0" stroke="#4040a0" stroke-width="0.8"/><path d="M14,9 v3" stroke="#c040c0" stroke-width="2"/></svg>
<svg class="a" style="left:828px;top:99px" width="23" height="23" viewBox="0 0 23 23"><rect x="1" y="2" width="20" height="16" fill="#fff" stroke="#666" stroke-width="0.8"/><path d="M1,6 h20 M1,10 h20 M1,14 h20 M6,2 v16 M11,2 v16 M16,2 v16" stroke="#888" stroke-width="0.8"/><rect x="1" y="14" width="12" height="4" fill="#f0e060"/><rect x="11" y="10" width="10" height="7" fill="#8080e0" stroke="#4040a0" stroke-width="0.8"/><path d="M16,17 v4" stroke="#c040c0" stroke-width="2"/></svg>
<svg class="a" style="left:858px;top:98px" width="24" height="25" viewBox="0 0 24 25"><path d="M5,2 v20" stroke="#2040c0" stroke-width="1.2"/><path d="M3,5 L5,1 L7,5Z" fill="#2040c0"/><path d="M5,7 L17,12 L5,19 M5,7 v12 M17,12 L22,9" stroke="#111" stroke-width="1.2" fill="none"/><path d="M17,12 L22,9 M20,8 L23,8 L21,11" stroke="#20a020" stroke-width="1.5" fill="none"/><path d="M14,18 L21,22" stroke="#d02020" stroke-width="1.5"/></svg>
<svg class="a" style="left:888px;top:132px" width="7" height="4" viewBox="0 0 7 4"><path d="M0,0 L7,0 L3.5,4 Z" fill="#000"/></svg>
<div class="a" style="left:899px;top:84px;width:1px;height:54px;background:#b0b0b0;border-right:1px solid #f4f4f4"></div>
<svg class="a" style="left:904px;top:85px" width="3" height="50" viewBox="0 0 3 50"><rect x="0" y="0" width="2" height="2" fill="#9a9a9a"/><rect x="1" y="1" width="2" height="2" fill="#fff"/><rect x="0" y="4" width="2" height="2" fill="#9a9a9a"/><rect x="1" y="5" width="2" height="2" fill="#fff"/><rect x="0" y="8" width="2" height="2" fill="#9a9a9a"/><rect x="1" y="9" width="2" height="2" fill="#fff"/><rect x="0" y="12" width="2" height="2" fill="#9a9a9a"/><rect x="1" y="13" width="2" height="2" fill="#fff"/><rect x="0" y="16" width="2" height="2" fill="#9a9a9a"/><rect x="1" y="17" width="2" height="2" fill="#fff"/><rect x="0" y="20" width="2" height="2" fill="#9a9a9a"/><rect x="1" y="21" width="2" height="2" fill="#fff"/><rect x="0" y="24" width="2" height="2" fill="#9a9a9a"/><rect x="1" y="25" width="2" height="2" fill="#fff"/><rect x="0" y="28" width="2" height="2" fill="#9a9a9a"/><rect x="1" y="29" width="2" height="2" fill="#fff"/><rect x="0" y="32" width="2" height="2" fill="#9a9a9a"/><rect x="1" y="33" width="2" height="2" fill="#fff"/><rect x="0" y="36" width="2" height="2" fill="#9a9a9a"/><rect x="1" y="37" width="2" height="2" fill="#fff"/><rect x="0" y="40" width="2" height="2" fill="#9a9a9a"/><rect x="1" y="41" width="2" height="2" fill="#fff"/><rect x="0" y="44" width="2" height="2" fill="#9a9a9a"/><rect x="1" y="45" width="2" height="2" fill="#fff"/></svg>
<svg class="a" style="left:925px;top:85px" width="23" height="23" viewBox="0 0 23 23"><defs><radialGradient id="gb" cx="35%" cy="30%"><stop offset="0" stop-color="#fff"/><stop offset=".5" stop-color="#b8b8b8"/><stop offset="1" stop-color="#606060"/></radialGradient></defs><circle cx="11.5" cy="11.5" r="11" fill="url(#gb)"/></svg>
<div class="a t" style="left:876px;top:114px;width:120px;text-align:center;font-size:12px;color:#000">真实着色</div>
<svg class="a" style="left:987px;top:86px" width="22" height="21" viewBox="0 0 22 21"><circle cx="11" cy="10.5" r="10.5" fill="#8a8a8a"/><path d="M3,15 Q11,22 19,15" stroke="#a09070" stroke-width="3" fill="none" opacity=".6"/></svg>
<div class="a t" style="left:937px;top:115px;width:120px;text-align:center;font-size:12px;color:#909090;line-height:10px">光亮金属<br>刷色</div>
<svg class="a" style="left:1031px;top:110px" width="7" height="4" viewBox="0 0 7 4"><path d="M0,0 L7,0 L3.5,4 Z" fill="#000"/></svg>
<svg class="a" style="left:1059px;top:86px" width="22" height="21" viewBox="0 0 22 21"><circle cx="11" cy="10.5" r="10.5" fill="#7e6a6a"/><circle cx="9" cy="8" r="4" fill="#8e7272"/></svg>
<div class="a t" style="left:1009px;top:115px;width:120px;text-align:center;font-size:12px;color:#909090;line-height:10px">红色高泽<br>塑料</div>
<svg class="a" style="left:1103px;top:110px" width="7" height="4" viewBox="0 0 7 4"><path d="M0,0 L7,0 L3.5,4 Z" fill="#000"/></svg>
<svg class="a" style="left:1130px;top:85px" width="24" height="24" viewBox="0 0 24 24"><rect x="0.5" y="0.5" width="23" height="23" fill="#8a8a8a" stroke="#6a6a6a"/><rect x="0" y="0" width="24" height="3" fill="#6e6e6e"/><path d="M13,8 q6,-4 8,2 q-2,5 -8,2" stroke="#9a5050" stroke-width="1.5" fill="none"/></svg>
<div class="a t" style="left:1081px;top:115px;width:120px;text-align:center;font-size:12px;color:#909090;line-height:10px">无全局反<br>射图</div>
<svg class="a" style="left:1175px;top:110px" width="7" height="4" viewBox="0 0 7 4"><path d="M0,0 L7,0 L3.5,4 Z" fill="#000"/></svg>
<svg class="a" style="left:1202px;top:85px" width="24" height="24" viewBox="0 0 24 24"><rect x="0.5" y="0.5" width="23" height="23" fill="#7e7e7e" stroke="#6a6a6a"/><rect x="0" y="0" width="24" height="3" fill="#6a6a6a"/></svg>
<div class="a t" style="left:1153px;top:115px;width:120px;text-align:center;font-size:12px;color:#909090;line-height:10px">渐变深灰<br>色背景</div>
<svg class="a" style="left:1247px;top:110px" width="7" height="4" viewBox="0 0 7 4"><path d="M0,0 L7,0 L3.5,4 Z" fill="#000"/></svg>
<svg class="a" style="left:1263px;top:84px" width="10" height="7" viewBox="0 0 10 7"><path d="M1,0.5 L4,3.5 L1,6.5 M5,0.5 L8,3.5 L5,6.5" stroke="#111" stroke-width="1.6" fill="none"/></svg>
<svg class="a" style="left:1264px;top:132px" width="7" height="4" viewBox="0 0 7 4"><path d="M0,0 L7,0 L3.5,4 Z" fill="#000"/></svg>
<div class="a" style="left:0;top:142px;width:1276px;height:34px;background:#d6d6d6;border-top:1px solid #ececec"></div>
<div class="a" style="left:0;top:176px;width:1276px;height:1px;background:#8a8a8a"></div>
<svg class="a" style="left:4px;top:147px" width="3" height="26" viewBox="0 0 3 26"><rect x="0" y="0" width="2" height="2" fill="#9a9a9a"/><rect x="1" y="1" width="2" height="2" fill="#fff"/><rect x="0" y="4" width="2" height="2" fill="#9a9a9a"/><rect x="1" y="5" width="2" height="2" fill="#fff"/><rect x="0" y="8" width="2" height="2" fill="#9a9a9a"/><rect x="1" y="9" width="2" height="2" fill="#fff"/><rect x="0" y="12" width="2" height="2" fill="#9a9a9a"/><rect x="1" y="13" width="2" height="2" fill="#fff"/><rect x="0" y="16" width="2" height="2" fill="#9a9a9a"/><rect x="1" y="17" width="2" height="2" fill="#fff"/><rect x="0" y="20" width="2" height="2" fill="#9a9a9a"/><rect x="1" y="21" width="2" height="2" fill="#fff"/></svg>
<svg class="a" style="left:13px;top:149px" width="21" height="20" viewBox="0 0 21 20"><rect x="6" y="2" width="13" height="12" fill="none" stroke="#101080" stroke-width="1.2"/><rect x="2" y="6" width="12" height="12" fill="#ffff90" stroke="#101080" stroke-width="1.5"/><g fill="#101080"><rect x="0" y="4" width="4" height="4"/><rect x="12" y="4" width="4" height="4"/><rect x="0" y="16" width="4" height="4"/><rect x="12" y="16" width="4" height="4"/><rect x="17" y="0" width="4" height="4"/><rect x="17" y="12" width="4" height="4"/></g></svg>
<svg class="a" style="left:43px;top:148px" width="22" height="21" viewBox="0 0 22 21"><g stroke="#606060" stroke-width="0.8"><path d="M1,6 L11,2 L21,6 L11,10Z" fill="#e0f0e0"/><path d="M1,10 L11,6 L21,10 L11,14Z" fill="#c0e8c0"/><path d="M1,14 L11,10 L21,14 L11,18Z" fill="#d8f0d8"/><path d="M1,17 L11,13 L21,17 L11,21Z" fill="#c8e8c8"/></g><g fill="#6060c0"><rect x="0" y="8" width="3" height="3"/><rect x="9" y="5" width="3" height="3"/><rect x="18" y="9" width="3" height="3"/><rect x="9" y="13" width="3" height="3"/></g></svg>
<svg class="a" style="left:74px;top:148px" width="23" height="21" viewBox="0 0 23 21"><g stroke="#606060" stroke-width="0.8"><path d="M1,6 L11,2 L21,6 L11,10Z" fill="#e0f0e0"/><path d="M1,10 L11,6 L21,10 L11,14Z" fill="#c0e8c0"/><path d="M1,14 L11,10 L21,14 L11,18Z" fill="#d8f0d8"/></g><rect x="10" y="7" width="12" height="14" fill="#f4f4ff" stroke="#6060b0" stroke-width="0.9"/><path d="M12,10 h2 M12,13 h2 M12,16 h2 M15,10 h5 M15,13 h5 M15,16 h5" stroke="#6060b0" stroke-width="1"/></svg>
<div class="a" style="left:103px;top:146px;width:1px;height:28px;background:#b0b0b0;border-right:1px solid #f4f4f4"></div>
<svg class="a" style="left:110px;top:153px" width="22" height="13" viewBox="0 0 22 13"><path d="M1,4 L15,1 L21,5 L17,12 L3,12Z" fill="#f8e8a0" stroke="#a09050" stroke-width="0.9"/><path d="M5,6 h8 M5,8.5 h8" stroke="#a09050" stroke-width="0.8"/><circle cx="18" cy="6" r="1.2" fill="#555"/></svg>
<div class="a" style="left:140px;top:146px;width:1px;height:28px;background:#b0b0b0;border-right:1px solid #f4f4f4"></div>
<svg class="a" style="left:147px;top:148px" width="23" height="22" viewBox="0 0 23 22"><path d="M7,4 L12,1 L16,3 L16,13 L11,16 L7,14Z" fill="#3060d0"/><path d="M7,4 L12,1 L16,3 L11,6Z" fill="#a0c0ff"/><path d="M10,12 L17,9 L22,11 L22,15 L15,18 L10,16Z" fill="#3060d0"/><path d="M1,14 L5,19 L12,10" stroke="#20b020" stroke-width="2.6" fill="none"/></svg>
<svg class="a" style="left:177px;top:148px" width="24" height="22" viewBox="0 0 24 22"><path d="M8,2 L14,1 L20,10 L12,12Z" fill="#f4f4ff" stroke="#3050c0" stroke-width="1.2"/><path d="M6,9 L22,19" stroke="#d0c030" stroke-width="3"/><path d="M1,14 L5,19 L12,10" stroke="#20b020" stroke-width="2.6" fill="none"/><path d="M10,6 L6,11" stroke="#111" stroke-width="1.5"/></svg>
<svg class="a" style="left:209px;top:148px" width="25" height="22" viewBox="0 0 25 22"><path d="M4,5 L9,2 L13,4 L13,16 L8,19 L4,17Z" fill="#3060d0"/><path d="M11,7 L17,4 L24,6 L24,16 L18,20 L11,17Z" fill="#f8c020"/><path d="M11,7 L17,4 L24,6 L18,9Z" fill="#fff080"/><path d="M1,14 L5,19 L12,10" stroke="#20b020" stroke-width="2.6" fill="none"/></svg>
<div class="a" style="left:240px;top:146px;width:1px;height:28px;background:#b0b0b0;border-right:1px solid #f4f4f4"></div>
<svg class="a" style="left:245px;top:148px" width="25" height="22" viewBox="0 0 25 22"><path d="M3,5 L9,2 L15,5 L15,11 L9,14 L3,11Z" fill="#f8d040"/><path d="M3,5 L9,2 L15,5 L9,8Z" fill="#fff0a0"/><path d="M14,9 L22,1" stroke="#e07020" stroke-width="2.5"/><rect x="2" y="13" width="17" height="8" fill="#fff" stroke="#402090" stroke-width="1"/><text x="3.5" y="20" font-size="6.5" font-weight="bold" fill="#402090" font-family="Liberation Sans">ABC</text><path d="M20,14 L25,17 L20,21Z" fill="#c020c0"/></svg>
<svg class="a" style="left:276px;top:166px" width="7" height="4" viewBox="0 0 7 4"><path d="M0,0 L7,0 L3.5,4 Z" fill="#000"/></svg>
<div class="a" style="left:288px;top:143px;width:1px;height:32px;background:#b0b0b0;border-right:1px solid #f4f4f4"></div>
<svg class="a" style="left:293px;top:147px" width="3" height="26" viewBox="0 0 3 26"><rect x="0" y="0" width="2" height="2" fill="#9a9a9a"/><rect x="1" y="1" width="2" height="2" fill="#fff"/><rect x="0" y="4" width="2" height="2" fill="#9a9a9a"/><rect x="1" y="5" width="2" height="2" fill="#fff"/><rect x="0" y="8" width="2" height="2" fill="#9a9a9a"/><rect x="1" y="9" width="2" height="2" fill="#fff"/><rect x="0" y="12" width="2" height="2" fill="#9a9a9a"/><rect x="1" y="13" width="2" height="2" fill="#fff"/><rect x="0" y="16" width="2" height="2" fill="#9a9a9a"/><rect x="1" y="17" width="2" height="2" fill="#fff"/><rect x="0" y="20" width="2" height="2" fill="#9a9a9a"/><rect x="1" y="21" width="2" height="2" fill="#fff"/></svg>
<svg class="a" style="left:299px;top:148px" width="24" height="20" viewBox="0 0 24 20"><path d="M1,13 L8,6 L22,6 L15,13Z" fill="#fff" stroke="#222" stroke-width="1.2"/><path d="M8,13 L14,3 L20,3 L14,13" fill="#fff" stroke="#222" stroke-width="1.2"/><path d="M1,13 H15" stroke="#222" stroke-width="1.2"/></svg>
<svg class="a" style="left:330px;top:148px" width="25" height="21" viewBox="0 0 25 21"><path d="M1,11 L8,4 L15,8 L10,18 Z" fill="#f0f0f0" stroke="#222" stroke-width="1.2"/><path d="M8,4 L16,2 L23,9 L15,8Z" fill="#fff" stroke="#222" stroke-width="1.2"/><path d="M10,18 L15,8 L23,9 L20,19Z" fill="#d8d8d8" stroke="#222" stroke-width="1.2"/><path d="M1,14 Q10,22 24,16" stroke="#222" stroke-width="1.2" fill="none"/></svg>
<svg class="a" style="left:361px;top:148px" width="26" height="21" viewBox="0 0 26 21"><path d="M4,1 v20" stroke="#111" stroke-width="1.5" stroke-dasharray="3,2"/><rect x="1" y="8" width="7" height="6" fill="#e02020"/><path d="M9,10 H19 Q21,10 21,12 V18 H12 Q9,18 9,15Z" fill="#f8e0b0" stroke="#806040" stroke-width="0.8"/><rect x="20" y="11" width="5" height="7" fill="#3040c0"/></svg>
<svg class="a" style="left:391px;top:166px" width="7" height="4" viewBox="0 0 7 4"><path d="M0,0 L7,0 L3.5,4 Z" fill="#000"/></svg>
<div class="a" style="left:402px;top:143px;width:1px;height:32px;background:#b0b0b0;border-right:1px solid #f4f4f4"></div>
<svg class="a" style="left:407px;top:147px" width="3" height="26" viewBox="0 0 3 26"><rect x="0" y="0" width="2" height="2" fill="#9a9a9a"/><rect x="1" y="1" width="2" height="2" fill="#fff"/><rect x="0" y="4" width="2" height="2" fill="#9a9a9a"/><rect x="1" y="5" width="2" height="2" fill="#fff"/><rect x="0" y="8" width="2" height="2" fill="#9a9a9a"/><rect x="1" y="9" width="2" height="2" fill="#fff"/><rect x="0" y="12" width="2" height="2" fill="#9a9a9a"/><rect x="1" y="13" width="2" height="2" fill="#fff"/><rect x="0" y="16" width="2" height="2" fill="#9a9a9a"/><rect x="1" y="17" width="2" height="2" fill="#fff"/><rect x="0" y="20" width="2" height="2" fill="#9a9a9a"/><rect x="1" y="21" width="2" height="2" fill="#fff"/></svg>
<svg class="a" style="left:418px;top:149px" width="18" height="21" viewBox="0 0 18 21"><rect x="2" y="1" width="14" height="19" rx="6" fill="#3040c0"/><path d="M2,4 h14 M2,7 h14 M2,10 h14 M2,13 h14 M2,16 h14" stroke="#8898ff" stroke-width="1.3"/></svg>
<svg class="a" style="left:448px;top:147px" width="21" height="24" viewBox="0 0 21 24"><path d="M4,3 Q2,0 6,1 M17,21 Q20,24 15,23" stroke="#3040c0" stroke-width="1.5" fill="none"/><path d="M4,4 L16,20" stroke="#3040c0" stroke-width="6"/><path d="M2,7 L9,3 M4,10 L11,6 M6,13 L13,9 M8,16 L15,12 M10,19 L17,15" stroke="#8898ff" stroke-width="1.2"/></svg>
<svg class="a" style="left:478px;top:149px" width="21" height="21" viewBox="0 0 21 21"><ellipse cx="11" cy="10.5" rx="9.5" ry="10" fill="#e8d020" stroke="#a08010" stroke-width="0.8"/><ellipse cx="9" cy="10.5" rx="5" ry="7" fill="#f8f080" stroke="#a08010" stroke-width="0.8"/><ellipse cx="9" cy="10.5" rx="2" ry="3" fill="#806010"/></svg>
<div class="a" style="left:507px;top:143px;width:1px;height:32px;background:#b0b0b0;border-right:1px solid #f4f4f4"></div>
<svg class="a" style="left:513px;top:148px" width="24" height="22" viewBox="0 0 24 22"><path d="M3,2 L18,17 M16,2 L4,16" stroke="#222" stroke-width="1.8"/><path d="M5,10 q6,-6 12,0 q6,6 -3,10 q-10,3 -9,-4" stroke="#5060d0" stroke-width="2" fill="none"/><path d="M10,8 q6,-4 10,2" stroke="#5060d0" stroke-width="2" fill="none"/></svg>
<svg class="a" style="left:543px;top:166px" width="7" height="4" viewBox="0 0 7 4"><path d="M0,0 L7,0 L3.5,4 Z" fill="#000"/></svg>
<div class="a" style="left:554px;top:143px;width:1px;height:32px;background:#b0b0b0;border-right:1px solid #f4f4f4"></div>
<div class="a" style="left:648px;top:143px;width:1px;height:32px;background:#b0b0b0;border-right:1px solid #f4f4f4"></div>
<svg class="a" style="left:652px;top:147px" width="3" height="26" viewBox="0 0 3 26"><rect x="0" y="0" width="2" height="2" fill="#9a9a9a"/><rect x="1" y="1" width="2" height="2" fill="#fff"/><rect x="0" y="4" width="2" height="2" fill="#9a9a9a"/><rect x="1" y="5" width="2" height="2" fill="#fff"/><rect x="0" y="8" width="2" height="2" fill="#9a9a9a"/><rect x="1" y="9" width="2" height="2" fill="#fff"/><rect x="0" y="12" width="2" height="2" fill="#9a9a9a"/><rect x="1" y="13" width="2" height="2" fill="#fff"/><rect x="0" y="16" width="2" height="2" fill="#9a9a9a"/><rect x="1" y="17" width="2" height="2" fill="#fff"/><rect x="0" y="20" width="2" height="2" fill="#9a9a9a"/><rect x="1" y="21" width="2" height="2" fill="#fff"/></svg>
<svg class="a" style="left:660px;top:149px" width="23" height="20" viewBox="0 0 23 20"><path d="M11.5,2 L21.5,18.5 H1.5Z" fill="none" stroke="#111" stroke-width="1.5"/></svg>
<svg class="a" style="left:690px;top:148px" width="23" height="22" viewBox="0 0 23 22"><rect x="1" y="1" width="20" height="17" fill="#fff" stroke="#606060" stroke-width="0.8"/><rect x="1" y="1" width="20" height="3" fill="#7050c0"/><path d="M1,7 h20 M1,10 h20 M1,13 h20 M6,4 v14 M11,4 v14 M16,4 v14" stroke="#909090" stroke-width="0.7"/><path d="M16,13 L22,21 H10Z" fill="#fff" stroke="#e02020" stroke-width="1.8"/></svg>
<svg class="a" style="left:720px;top:148px" width="24" height="22" viewBox="0 0 24 22"><path d="M1,5 h8 l2,-2 h10 v15 h-20z" fill="#f0d870" stroke="#b09040" stroke-width="0.8"/><path d="M1,18 L5,8 h18 l-3,10z" fill="#f8e890" stroke="#b09040" stroke-width="0.8"/><g stroke="#d01010" stroke-width="1.4"><path d="M14,4 v8 M10,8 h8 M7,12 v8 M3,16 h8 M18,14 v8 M14,18 h8"/></g></svg>
<svg class="a" style="left:752px;top:148px" width="23" height="22" viewBox="0 0 23 22"><path d="M1,5 h8 l2,-2 h10 v15 h-20z" fill="#f0d870" stroke="#b09040" stroke-width="0.8"/><path d="M1,18 L5,8 h18 l-3,10z" fill="#f8e890" stroke="#b09040" stroke-width="0.8"/><g fill="none" stroke="#111" stroke-width="1.3"><circle cx="16" cy="7" r="4"/><circle cx="7" cy="17" r="4"/><circle cx="17" cy="17" r="4"/></g></svg>
<svg class="a" style="left:782px;top:166px" width="7" height="4" viewBox="0 0 7 4"><path d="M0,0 L7,0 L3.5,4 Z" fill="#000"/></svg>
<div class="a" style="left:793px;top:143px;width:1px;height:32px;background:#b0b0b0;border-right:1px solid #f4f4f4"></div>
<div class="a" style="left:826px;top:143px;width:1px;height:32px;background:#b0b0b0;border-right:1px solid #f4f4f4"></div>
<svg class="a" style="left:830px;top:147px" width="3" height="26" viewBox="0 0 3 26"><rect x="0" y="0" width="2" height="2" fill="#9a9a9a"/><rect x="1" y="1" width="2" height="2" fill="#fff"/><rect x="0" y="4" width="2" height="2" fill="#9a9a9a"/><rect x="1" y="5" width="2" height="2" fill="#fff"/><rect x="0" y="8" width="2" height="2" fill="#9a9a9a"/><rect x="1" y="9" width="2" height="2" fill="#fff"/><rect x="0" y="12" width="2" height="2" fill="#9a9a9a"/><rect x="1" y="13" width="2" height="2" fill="#fff"/><rect x="0" y="16" width="2" height="2" fill="#9a9a9a"/><rect x="1" y="17" width="2" height="2" fill="#fff"/><rect x="0" y="20" width="2" height="2" fill="#9a9a9a"/><rect x="1" y="21" width="2" height="2" fill="#fff"/></svg>
<svg class="a" style="left:836px;top:149px" width="24" height="21" viewBox="0 0 24 21"><path d="M6,3 L11,1 L16,3 L16,12 L11,14 L6,12Z" fill="#f8d030" stroke="#a08010" stroke-width="0.7"/><path d="M14,11 L19,9 L23,11 L23,19 L18,21 L14,19Z" fill="#f8e060" stroke="#a08010" stroke-width="0.7"/><rect x="2" y="13" width="11" height="7" fill="#e8c020" stroke="#806010" stroke-width="0.8"/><path d="M4,13 v-3 q3,-3 6,0 v3" stroke="#806010" stroke-width="1.2" fill="none"/></svg>
<svg class="a" style="left:867px;top:149px" width="24" height="21" viewBox="0 0 24 21"><path d="M7,3 L12,1 L17,3 L17,12 L12,14 L7,12Z" fill="#f8d030" stroke="#a08010" stroke-width="0.7"/><path d="M14,11 L19,9 L23,11 L23,19 L18,21 L14,19Z" fill="#f8e060" stroke="#a08010" stroke-width="0.7"/><rect x="2" y="13" width="11" height="7" fill="#e8c020" stroke="#806010" stroke-width="0.8"/><path d="M4,13 v-3 q3,-3 6,0 v3" stroke="#806010" stroke-width="1.2" fill="none"/></svg>
<svg class="a" style="left:897px;top:166px" width="7" height="4" viewBox="0 0 7 4"><path d="M0,0 L7,0 L3.5,4 Z" fill="#000"/></svg>
<div class="a" style="left:908px;top:143px;width:1px;height:32px;background:#b0b0b0;border-right:1px solid #f4f4f4"></div>
<div class="a" style="left:0;top:177px;width:1276px;height:26px;background:linear-gradient(#cdcdcd,#d8d8d8 40%,#dedede)"></div>
<div class="a" style="left:6px;top:182px;width:109px;height:16px;background:#fff;border:1px solid #7a8aa0;border-radius:2px"></div>
<div class="a" style="left:98px;top:182px;width:17px;height:16px;background:linear-gradient(#c8e0f8,#6898d8);border:1px solid #5070a0;border-radius:2px"></div>
<svg class="a" style="left:102px;top:186px" width="10" height="7" viewBox="0 0 10 7"><path d="M0,0 H10 L5,7Z" fill="#111"/></svg>
<div class="a t" style="left:7px;top:184px;font-size:12px;color:#000;">所有选择过滤器</div>
<div class="a" style="left:123px;top:182px;width:116px;height:16px;background:#fff;border:1px solid #7a8aa0;border-radius:2px"></div>
<div class="a" style="left:222px;top:182px;width:17px;height:16px;background:linear-gradient(#c8e0f8,#6898d8);border:1px solid #5070a0;border-radius:2px"></div>
<svg class="a" style="left:226px;top:186px" width="10" height="7" viewBox="0 0 10 7"><path d="M0,0 H10 L5,7Z" fill="#111"/></svg>
<div class="a t" style="left:124px;top:184px;font-size:12px;color:#000;">整个装配</div>
<svg class="a" style="left:247px;top:180px" width="17" height="17" viewBox="0 0 17 17"><path d="M2,8 L8,3 L8,16 L2,14Z M9,6 L15,3 L16,12 L10,15Z" fill="#9a9a9a"/><circle cx="12" cy="6" r="3" fill="#aaa"/></svg>
<div class="a" style="left:270px;top:179px;width:1px;height:21px;background:#b0b0b0;border-right:1px solid #f4f4f4"></div>
<svg class="a" style="left:276px;top:180px" width="16" height="17" viewBox="0 0 16 17"><path d="M2,4 L8,1 L13,4 M3,9 l5,3 l5,-3 M8,12 v5" stroke="#8a9aaa" stroke-width="2" fill="none"/></svg>
<svg class="a" style="left:299px;top:180px" width="17" height="18" viewBox="0 0 17 18"><path d="M3,6 Q4,1 9,3" stroke="#3040c0" stroke-width="1.8" fill="none"/><path d="M1,5 L4,8 L6,4Z" fill="#3040c0"/><circle cx="9" cy="11" r="4.5" fill="none" stroke="#d02020" stroke-width="1.3"/><path d="M9,5 v12 M3,11 h12" stroke="#d02020" stroke-width="1.3"/></svg>
<svg class="a" style="left:322px;top:180px" width="17" height="18" viewBox="0 0 17 18"><path d="M1,3 h6 M2,6 h5" stroke="#3050a0" stroke-width="1.5"/><circle cx="9" cy="6" r="2" fill="#608060"/><rect x="10" y="10" width="5" height="7" fill="#f0e0a0" stroke="#806040" stroke-width="0.7"/></svg>
<div class="a" style="left:345px;top:179px;width:1px;height:21px;background:#b0b0b0;border-right:1px solid #f4f4f4"></div>
<svg class="a" style="left:350px;top:181px" width="18" height="16" viewBox="0 0 18 16"><path d="M2,8 L9,2 L17,5 L16,12 L9,15 L2,12Z" fill="#f0f0f0" stroke="#444" stroke-width="1"/><path d="M5,8 L12,5" stroke="#e02020" stroke-width="2"/></svg>
<svg class="a" style="left:373px;top:180px" width="18" height="17" viewBox="0 0 18 17"><path d="M1,5 L8,1 L17,4 L17,13 L9,17 L1,13Z" fill="#40a0e8"/><path d="M1,5 L8,1 L17,4 L9,8Z" fill="#c0e8ff"/><path d="M9,8 L17,4 V13 L9,17Z" fill="#2070c0"/><path d="M2,5 L10,8 V16" stroke="#e02020" stroke-width="0.8" fill="none"/></svg>
<div class="a" style="left:397px;top:179px;width:1px;height:21px;background:#b0b0b0;border-right:1px solid #f4f4f4"></div>
<div class="a" style="left:400px;top:180px;width:22px;height:21px;background:#fff;border:1px solid #606060;border-radius:3px"></div>
<svg class="a" style="left:400px;top:180px" width="22" height="21" viewBox="0 0 22 21"><path d="M5,16 L17,5" stroke="#111" stroke-width="1.3"/><circle cx="17" cy="5" r="1.8" fill="#e02020"/></svg>
<div class="a" style="left:423px;top:180px;width:22px;height:21px;background:#fff;border:1px solid #606060;border-radius:3px"></div>
<svg class="a" style="left:423px;top:180px" width="22" height="21" viewBox="0 0 22 21"><path d="M5,16 L17,5" stroke="#111" stroke-width="1.3"/><circle cx="11" cy="10.5" r="1.8" fill="#e02020"/></svg>
<svg class="a" style="left:450px;top:181px" width="15" height="19" viewBox="0 0 15 19"><path d="M2,3 Q6,2 7,9 Q8,16 14,16" stroke="#111" stroke-width="1.3" fill="none"/><circle cx="7" cy="9" r="1.8" fill="#e02020"/></svg>
<svg class="a" style="left:472px;top:181px" width="17" height="19" viewBox="0 0 17 19"><path d="M2,16 Q8,3 15,16 M8,3 V17" stroke="#111" stroke-width="1.3" fill="none"/><circle cx="8" cy="9" r="1.6" fill="#e02020"/></svg>
<div class="a" style="left:492px;top:180px;width:22px;height:21px;background:#fff;border:1px solid #606060;border-radius:3px"></div>
<svg class="a" style="left:492px;top:180px" width="22" height="21" viewBox="0 0 22 21"><circle cx="11" cy="10.5" r="6.5" fill="none" stroke="#111" stroke-width="1.3"/><circle cx="11" cy="10.5" r="1.8" fill="#e02020"/></svg>
<svg class="a" style="left:518px;top:181px" width="18" height="19" viewBox="0 0 18 19"><circle cx="9" cy="9.5" r="6.5" fill="none" stroke="#d02020" stroke-width="1.4"/><g fill="#d02020"><circle cx="9" cy="3" r="1.8"/><circle cx="9" cy="16" r="1.8"/><circle cx="2.5" cy="9.5" r="1.8"/><circle cx="15.5" cy="9.5" r="1.8"/></g></svg>
<div class="a" style="left:538px;top:180px;width:22px;height:21px;background:#fff;border:1px solid #606060;border-radius:3px"></div>
<svg class="a" style="left:538px;top:180px" width="22" height="21" viewBox="0 0 22 21"><path d="M11,4 V17 M4,10.5 H18" stroke="#111" stroke-width="1.3"/><circle cx="11" cy="10.5" r="1.6" fill="#e02020"/></svg>
<div class="a" style="left:561px;top:180px;width:22px;height:21px;background:#fff;border:1px solid #606060;border-radius:3px"></div>
<svg class="a" style="left:561px;top:180px" width="22" height="21" viewBox="0 0 22 21"><path d="M5,16 L17,5" stroke="#111" stroke-width="1.3"/><circle cx="7" cy="14" r="1.8" fill="#e02020"/></svg>
<svg class="a" style="left:586px;top:181px" width="17" height="17" viewBox="0 0 17 17"><path d="M1,8 Q6,2 14,2 L16,13 Q8,12 4,16Z" fill="#80c0f0" stroke="#4080c0" stroke-width="0.8"/><circle cx="11" cy="6" r="2" fill="#e02020"/></svg>
<div class="a" style="left:609px;top:179px;width:1px;height:21px;background:#b0b0b0;border-right:1px solid #f4f4f4"></div>
<svg class="a" style="left:617px;top:181px" width="14" height="16" viewBox="0 0 14 16"><path d="M1,2 L12,4 L12,15 L1,13Z" fill="#fff" stroke="#222" stroke-width="1"/><path d="M1,6 L12,8 M1,10 L12,12 M5,3 V14 M9,4 V14" stroke="#222" stroke-width="1"/><circle cx="7" cy="8" r="1.5" fill="#e02020"/></svg>
<svg class="a" style="left:1264px;top:194px" width="7" height="4" viewBox="0 0 7 4"><path d="M0,0 L7,0 L3.5,4 Z" fill="#000"/></svg>
<div class="a" style="left:0;top:203px;width:1276px;height:23px;background:#dcdcdc;border-top:2px solid #f8f8f8"></div>
<div class="a" style="left:588px;top:204px;width:1px;height:22px;background:#f8f8f8"></div>
<div class="a t" style="left:592px;top:209px;font-size:12.5px;color:#000;font-weight:bold;">体</div>
<div class="a t" style="left:607px;top:209px;font-size:12px;color:#000;font-weight:bold;letter-spacing:1px">(0)</div>
<div class="a t" style="left:634px;top:209px;font-size:12.5px;color:#000;font-weight:bold;">已选定</div>
<div class="a" style="left:1177px;top:204px;width:2px;height:22px;background:#f8f8f8"></div>
<div class="a" style="left:1197px;top:204px;width:2px;height:22px;background:#f8f8f8"></div>
<svg class="a" style="left:1236px;top:206px" width="17" height="17" viewBox="0 0 17 17"><rect x="0" y="0" width="17" height="17" fill="#8aa0a0"/><path d="M3,12 q4,-8 10,-4" stroke="#a8b8b8" stroke-width="2" fill="none"/></svg>
<svg class="a" style="left:1257px;top:206px" width="16" height="17" viewBox="0 0 16 17"><rect x="3" y="4" width="10" height="9" fill="#3070d0" stroke="#222" stroke-width="1"/><path d="M0,4 V0 H4 M12,0 H16 V4 M16,13 V17 H12 M4,17 H0 V13" stroke="#333" stroke-width="1.5" fill="none"/><rect x="4" y="5" width="8" height="3" fill="#a0c8ff"/></svg>
<div class="a" style="left:0;top:226px;width:33px;height:606px;background:linear-gradient(90deg,#9c9c9c,#b4b4b4)"></div>
<div class="a" style="left:7px;top:244px;width:26px;height:39px;background:linear-gradient(90deg,#e4e4e4,#d0d0d0);border:1px solid #8a8a8a;border-right:none;border-radius:5px 0 0 5px"></div>
<div class="a" style="left:7px;top:285.5px;width:26px;height:39px;background:linear-gradient(90deg,#e4e4e4,#d0d0d0);border:1px solid #8a8a8a;border-right:none;border-radius:5px 0 0 5px"></div>
<div class="a" style="left:7px;top:327px;width:28px;height:39px;background:#ececec;border:1px solid #8a8a8a;border-right:none;border-radius:5px 0 0 5px"></div>
<div class="a" style="left:7px;top:370px;width:26px;height:39px;background:linear-gradient(90deg,#e4e4e4,#d0d0d0);border:1px solid #8a8a8a;border-right:none;border-radius:5px 0 0 5px"></div>
<div class="a" style="left:7px;top:424px;width:26px;height:39px;background:linear-gradient(90deg,#e4e4e4,#d0d0d0);border:1px solid #8a8a8a;border-right:none;border-radius:5px 0 0 5px"></div>
<div class="a" style="left:7px;top:478px;width:26px;height:39px;background:linear-gradient(90deg,#e4e4e4,#d0d0d0);border:1px solid #8a8a8a;border-right:none;border-radius:5px 0 0 5px"></div>
<div class="a" style="left:7px;top:532px;width:26px;height:39px;background:linear-gradient(90deg,#e4e4e4,#d0d0d0);border:1px solid #8a8a8a;border-right:none;border-radius:5px 0 0 5px"></div>
<div class="a" style="left:7px;top:574px;width:26px;height:39px;background:linear-gradient(90deg,#e4e4e4,#d0d0d0);border:1px solid #8a8a8a;border-right:none;border-radius:5px 0 0 5px"></div>
<div class="a" style="left:7px;top:616px;width:26px;height:39px;background:linear-gradient(90deg,#e4e4e4,#d0d0d0);border:1px solid #8a8a8a;border-right:none;border-radius:5px 0 0 5px"></div>
<div class="a" style="left:7px;top:658px;width:26px;height:39px;background:linear-gradient(90deg,#e4e4e4,#d0d0d0);border:1px solid #8a8a8a;border-right:none;border-radius:5px 0 0 5px"></div>
<div class="a" style="left:7px;top:700px;width:26px;height:39px;background:linear-gradient(90deg,#e4e4e4,#d0d0d0);border:1px solid #8a8a8a;border-right:none;border-radius:5px 0 0 5px"></div>
<div class="a" style="left:7px;top:742px;width:26px;height:39px;background:linear-gradient(90deg,#e4e4e4,#d0d0d0);border:1px solid #8a8a8a;border-right:none;border-radius:5px 0 0 5px"></div>
<svg class="a" style="left:10px;top:249px" width="22" height="30" viewBox="0 0 22 30"><g fill="#f8d030" stroke="#c09010" stroke-width="0.6"><path d="M3,5 L7,3 L11,5 L11,10 L7,12 L3,10Z"/><path d="M8,9 L12,7 L16,9 L16,14 L12,16 L8,14Z"/><path d="M13,21 L17,19 L21,21 L21,26 L17,28 L13,26Z"/></g><path d="M4,14 V28 M4,21 H11 M14,17 H21" stroke="#2030b0" stroke-width="1.2"/></svg>
<svg class="a" style="left:10px;top:290px" width="22" height="30" viewBox="0 0 22 30"><path d="M2,4 L9,9 L2,14Z M18,4 L11,9 L18,14Z" fill="#1020d0"/><path d="M10,2 V30" stroke="#222" stroke-width="1" stroke-dasharray="2,1.5"/><rect x="2" y="17" width="7" height="7" fill="#f8e030" stroke="#806010" stroke-width="0.7"/><path d="M11,16 L19,26 H11Z" fill="#d02010"/></svg>
<svg class="a" style="left:10px;top:334px" width="22" height="30" viewBox="0 0 22 30"><path d="M13,19 H21" stroke="#222" stroke-width="1"/><path d="M4,22 V30 M4,26 H11" stroke="#2030b0" stroke-width="1.2"/><circle cx="16" cy="26" r="3.5" fill="none" stroke="#802060" stroke-width="1.2"/><circle cx="16" cy="26" r="1" fill="#802060"/></svg>
<svg class="a" style="left:9px;top:374px" width="23" height="30" viewBox="0 0 23 30"><path d="M2,10 L6,6 H10 V27 H2Z" fill="#f09020"/><path d="M8,10 L12,6 H16 V27 H8Z" fill="#20b040"/><path d="M14,10 L18,6 H22 V26 L18,28 H14Z" fill="#2070d0"/><path d="M2,10 H10 M8,10 H16 M14,10 H22" stroke="#fff" stroke-width="0.8"/></svg>
<svg class="a" style="left:9px;top:428px" width="23" height="30" viewBox="0 0 23 30"><path d="M9,8 q8,0 11,9 M10,3 q12,1 14,14" stroke="#2050c0" stroke-width="2.5" fill="none"/><circle cx="8" cy="19" r="7.5" fill="#2060c8"/><rect x="7" y="17" width="2.5" height="6" fill="#fff"/><circle cx="8.2" cy="14.5" r="1.3" fill="#fff"/></svg>
<div class="a" style="left:0;top:470px;width:10px;height:58px;background:#3a3c48;border-radius:0 3px 3px 0"></div>
<svg class="a" style="left:2px;top:476px" width="6" height="50" viewBox="0 0 6 50"><rect x="0" y="0.0" width="5" height="1" fill="#6a6c78"/><rect x="0" y="2.5" width="5" height="1" fill="#6a6c78"/><rect x="0" y="5.0" width="5" height="1" fill="#6a6c78"/><rect x="0" y="7.5" width="5" height="1" fill="#6a6c78"/><rect x="0" y="10.0" width="5" height="1" fill="#6a6c78"/><rect x="0" y="12.5" width="5" height="1" fill="#6a6c78"/><rect x="0" y="15.0" width="5" height="1" fill="#6a6c78"/><rect x="0" y="17.5" width="5" height="1" fill="#6a6c78"/><rect x="0" y="20.0" width="5" height="1" fill="#6a6c78"/><rect x="0" y="22.5" width="5" height="1" fill="#6a6c78"/><rect x="0" y="25.0" width="5" height="1" fill="#6a6c78"/><rect x="0" y="27.5" width="5" height="1" fill="#6a6c78"/><rect x="0" y="32.0" width="5" height="1.2" fill="#40c060"/><rect x="0" y="34.5" width="5" height="1.2" fill="#40c060"/><rect x="0" y="37.0" width="5" height="1.2" fill="#40c060"/><rect x="0" y="39.5" width="5" height="1.2" fill="#40c060"/><rect x="0" y="42.0" width="5" height="1.2" fill="#40c060"/><rect x="0" y="44.5" width="5" height="1.2" fill="#40c060"/></svg>
<svg class="a" style="left:12px;top:482px" width="20" height="30" viewBox="0 0 20 30"><path d="M2,3 H13 L19,9 V27 H2Z" fill="#fff" stroke="#6080c0" stroke-width="1"/><circle cx="11" cy="18" r="6" fill="#2a9a50"/><path d="M8,15 q3,-2 5,1 q-1,3 -4,2" fill="#60a0e0"/></svg>
<svg class="a" style="left:10px;top:537px" width="22" height="30" viewBox="0 0 22 30"><circle cx="11" cy="15" r="9.5" fill="#e0e8f8" stroke="#606a80" stroke-width="1.5"/><path d="M11,8 V15 H16" stroke="#111" stroke-width="2" fill="none"/></svg>
<svg class="a" style="left:10px;top:579px" width="22" height="30" viewBox="0 0 22 30"><path d="M2,9 L8,5 V27 L2,29Z" fill="#fff" stroke="#666" stroke-width="0.8"/><rect x="8" y="5" width="13" height="18" fill="#fff" stroke="#777" stroke-width="0.8"/><circle cx="11" cy="9" r="1.8" fill="#3070e0"/><circle cx="11" cy="14" r="1.8" fill="#30b030"/><circle cx="11" cy="19" r="1.8" fill="#e03030"/><path d="M14,9 h5 M14,14 h5 M14,19 h5" stroke="#333" stroke-width="1"/></svg>
<svg class="a" style="left:10px;top:621px" width="22" height="30" viewBox="0 0 22 30"><defs><linearGradient id="rb" x1="0" y1="0" x2="0" y2="1"><stop offset="0" stop-color="#e02020"/><stop offset=".3" stop-color="#f0e020"/><stop offset=".6" stop-color="#20d040"/><stop offset="1" stop-color="#2040e0"/></linearGradient></defs><rect x="2" y="4" width="7" height="23" fill="url(#rb)"/><path d="M11,8 L20,22" stroke="#111" stroke-width="2.5"/><circle cx="10" cy="7" r="2" fill="#fff"/></svg>
<svg class="a" style="left:10px;top:663px" width="22" height="30" viewBox="0 0 22 30"><path d="M3,6 V26 M7,6 V26" stroke="#3070d0" stroke-width="3"/><path d="M1,26 h12" stroke="#40a0e0" stroke-width="2"/><path d="M9,10 h12 l-6,8" stroke="#3070d0" stroke-width="1.5" fill="none"/><path d="M12,12 L19,24" stroke="#111" stroke-width="2.2"/></svg>
<svg class="a" style="left:9px;top:705px" width="23" height="30" viewBox="0 0 23 30"><circle cx="17" cy="10" r="4.5" fill="#d0a050"/><path d="M10,24 q0,-8 7,-8 q7,0 7,8Z" fill="#30a030"/><circle cx="8" cy="14" r="4.5" fill="#b08060"/><path d="M1,28 q0,-8 7,-8 q7,0 7,8Z" fill="#a040c0"/></svg>
<svg class="a" style="left:10px;top:747px" width="22" height="30" viewBox="0 0 22 30"><path d="M2,9 L8,5 V27 L2,29Z" fill="#fff" stroke="#666" stroke-width="0.8"/><rect x="8" y="7" width="13" height="15" fill="#fff" stroke="#777" stroke-width="0.8"/><rect x="9" y="8" width="11" height="10" fill="#d02020"/><path d="M11,8 q3,6 6,0" fill="#3070e0"/><rect x="9" y="17" width="11" height="3" fill="#f0a030"/></svg>
<div class="a" style="left:33px;top:226px;width:298px;height:605px;background:#ececec;border-right:1px solid #8c8c8c"></div>
<svg class="a" style="left:47px;top:236px" width="12" height="12" viewBox="0 0 12 12"><circle cx="7" cy="5.5" r="4.5" fill="#d8e060" stroke="#222" stroke-width="1"/><path d="M4,8 L1,11" stroke="#222" stroke-width="1.5"/><circle cx="6" cy="4" r="1.5" fill="#fff"/></svg>
<div class="a t" style="left:72px;top:236px;font-size:13px;color:#000;font-weight:bold;">部件导航器</div>
<div class="a" style="left:42px;top:257px;width:278px;height:557px;background:#fff;border:1px solid #6a6a6a"></div>
<div class="a" style="left:43px;top:258px;width:201px;height:17px;background:linear-gradient(#e0f4fc,#a8dcf4 50%,#70c8ec);border:1px solid #3a90c8"></div>
<div class="a" style="left:244px;top:258px;width:75px;height:17px;background:linear-gradient(#f4f4f4,#e4e4e4 60%,#cfcfcf);border-bottom:1px solid #a0a0a0"></div>
<div class="a t" style="left:50px;top:260px;font-size:12px;color:#000;">名称</div>
<svg class="a" style="left:89px;top:263px" width="11" height="7" viewBox="0 0 11 7"><path d="M0,7 L5.5,0 L11,7Z" fill="#111"/></svg>
<div class="a t" style="left:249px;top:260px;font-size:12px;color:#000;">附注</div>
<div class="a" style="left:43px;top:275px;width:259px;height:20px;background:#ffffff;border-bottom:1px dotted #d8d8d8"></div>
<div class="a" style="left:43px;top:295px;width:259px;height:20px;background:#f3f3f3;border-bottom:1px dotted #d8d8d8"></div>
<div class="a" style="left:43px;top:315px;width:259px;height:20px;background:#ffffff;border-bottom:1px dotted #d8d8d8"></div>
<div class="a" style="left:43px;top:335px;width:259px;height:20px;background:#f3f3f3;border-bottom:1px dotted #d8d8d8"></div>
<div class="a" style="left:43px;top:355px;width:259px;height:20px;background:#ffffff;border-bottom:1px dotted #d8d8d8"></div>
<div class="a" style="left:43px;top:375px;width:259px;height:20px;background:#f3f3f3;border-bottom:1px dotted #d8d8d8"></div>
<div class="a" style="left:43px;top:395px;width:259px;height:20px;background:#ffffff;border-bottom:1px dotted #d8d8d8"></div>
<div class="a" style="left:43px;top:415px;width:259px;height:20px;background:#f3f3f3;border-bottom:1px dotted #d8d8d8"></div>
<div class="a" style="left:43px;top:435px;width:259px;height:20px;background:#ffffff;border-bottom:1px dotted #d8d8d8"></div>
<div class="a" style="left:43px;top:455px;width:259px;height:20px;background:#f3f3f3;border-bottom:1px dotted #d8d8d8"></div>
<div class="a" style="left:43px;top:475px;width:259px;height:20px;background:#ffffff;border-bottom:1px dotted #d8d8d8"></div>
<div class="a" style="left:43px;top:495px;width:259px;height:20px;background:#f3f3f3;border-bottom:1px dotted #d8d8d8"></div>
<div class="a" style="left:43px;top:515px;width:259px;height:20px;background:#ffffff;border-bottom:1px dotted #d8d8d8"></div>
<div class="a" style="left:43px;top:535px;width:259px;height:20px;background:#f3f3f3;border-bottom:1px dotted #d8d8d8"></div>
<div class="a" style="left:43px;top:555px;width:259px;height:20px;background:#ffffff;border-bottom:1px dotted #d8d8d8"></div>
<div class="a" style="left:43px;top:575px;width:259px;height:20px;background:#f3f3f3;border-bottom:1px dotted #d8d8d8"></div>
<div class="a" style="left:43px;top:595px;width:259px;height:20px;background:#ffffff;border-bottom:1px dotted #d8d8d8"></div>
<div class="a" style="left:43px;top:615px;width:259px;height:20px;background:#f3f3f3;border-bottom:1px dotted #d8d8d8"></div>
<div class="a" style="left:43px;top:635px;width:259px;height:20px;background:#ffffff;border-bottom:1px dotted #d8d8d8"></div>
<div class="a" style="left:43px;top:655px;width:259px;height:20px;background:#f3f3f3;border-bottom:1px dotted #d8d8d8"></div>
<div class="a" style="left:43px;top:675px;width:259px;height:20px;background:#ffffff;border-bottom:1px dotted #d8d8d8"></div>
<div class="a" style="left:43px;top:695px;width:259px;height:20px;background:#f3f3f3;border-bottom:1px dotted #d8d8d8"></div>
<div class="a" style="left:43px;top:715px;width:259px;height:20px;background:#ffffff;border-bottom:1px dotted #d8d8d8"></div>
<div class="a" style="left:43px;top:735px;width:259px;height:20px;background:#f3f3f3;border-bottom:1px dotted #d8d8d8"></div>
<div class="a" style="left:43px;top:755px;width:259px;height:20px;background:#ffffff;border-bottom:1px dotted #d8d8d8"></div>
<div class="a" style="left:43px;top:775px;width:259px;height:20px;background:#f3f3f3;border-bottom:1px dotted #d8d8d8"></div>
<div class="a" style="left:243px;top:275px;width:1px;height:520px;border-left:1px dotted #c8c8c8"></div>
<div class="a" style="left:114px;top:295px;width:188px;height:20px;background:#3296f8;border:1px dotted #1a4a9a"></div>
<div class="a" style="left:243px;top:296px;width:1px;height:18px;background:#e8f0ff"></div>
<div class="a" style="left:72px;top:293px;width:1px;height:502px;border-left:1px dotted #808080"></div>
<div class="a" style="left:48px;top:280px;width:9px;height:9px;border:1px solid #909090;border-radius:2px;background:#fff"></div>
<div class="a" style="left:50px;top:284px;width:5px;height:1px;background:#333"></div>
<svg class="a" style="left:62px;top:280px" width="17" height="13" viewBox="0 0 17 13"><path d="M1,2 h5 l1.5,1.5 h7 v8.5 h-13.5z" fill="#e8b830" stroke="#a07010" stroke-width="0.7"/><path d="M1,12 L4,5.5 H16.5 L13.5,12Z" fill="#f8d860" stroke="#a07010" stroke-width="0.7"/></svg>
<div class="a t" style="left:82px;top:279px;font-size:12px;color:#000;">模型历史记录</div>
<div class="a" style="left:73px;top:305px;width:10px;height:1px;border-top:1px dotted #808080"></div>
<div class="a" style="left:84px;top:299px;width:13px;height:12px;background:#fff;border:1.5px solid #111"></div>
<svg class="a" style="left:85px;top:300px" width="11" height="10" viewBox="0 0 11 10"><path d="M1.5,5 L4.5,8.5 L10,1.5" stroke="#20c020" stroke-width="2.6" fill="none"/></svg>
<svg class="a" style="left:97px;top:297px" width="17" height="17" viewBox="0 0 17 17"><circle cx="5" cy="5" r="4" fill="none" stroke="#e02030" stroke-width="1.6"/><path d="M2,8 L8,2" stroke="#e02030" stroke-width="1.4"/><path d="M8,2 h4 M10,2 v6" stroke="#111" stroke-width="1.3"/><path d="M2,11 L8,8 H16 V14 L10,17 H2Z" fill="#3a80e0"/><path d="M2,11 L8,8 H16 L10,11Z" fill="#a0d0ff"/><rect x="6" y="5" width="5" height="5" fill="#80b8f0"/></svg>
<div class="a t" style="left:117px;top:299px;font-size:12px;color:#fff">体<span style="font-size:11px;margin-left:7px;letter-spacing:1px">(0)</span></div>
<div class="a" style="left:73px;top:325px;width:10px;height:1px;border-top:1px dotted #808080"></div>
<div class="a" style="left:84px;top:319px;width:13px;height:12px;background:#fff;border:1.5px solid #111"></div>
<svg class="a" style="left:85px;top:320px" width="11" height="10" viewBox="0 0 11 10"><path d="M1.5,5 L4.5,8.5 L10,1.5" stroke="#20c020" stroke-width="2.6" fill="none"/></svg>
<svg class="a" style="left:97px;top:317px" width="17" height="17" viewBox="0 0 17 17"><circle cx="5" cy="5" r="4" fill="none" stroke="#e02030" stroke-width="1.6"/><path d="M2,8 L8,2" stroke="#e02030" stroke-width="1.4"/><path d="M8,2 h4 M10,2 v6" stroke="#111" stroke-width="1.3"/><path d="M2,11 L8,8 H16 V14 L10,17 H2Z" fill="#3a80e0"/><path d="M2,11 L8,8 H16 L10,11Z" fill="#a0d0ff"/><rect x="6" y="5" width="5" height="5" fill="#80b8f0"/></svg>
<div class="a t" style="left:117px;top:319px;font-size:12px;color:#000">体<span style="font-size:11px;margin-left:7px;letter-spacing:1px">(1)</span></div>
<div class="a" style="left:73px;top:345px;width:10px;height:1px;border-top:1px dotted #808080"></div>
<div class="a" style="left:84px;top:339px;width:13px;height:12px;background:#fff;border:1.5px solid #111"></div>
<svg class="a" style="left:85px;top:340px" width="11" height="10" viewBox="0 0 11 10"><path d="M1.5,5 L4.5,8.5 L10,1.5" stroke="#20c020" stroke-width="2.6" fill="none"/></svg>
<svg class="a" style="left:97px;top:337px" width="17" height="17" viewBox="0 0 17 17"><circle cx="5" cy="5" r="4" fill="none" stroke="#e02030" stroke-width="1.6"/><path d="M2,8 L8,2" stroke="#e02030" stroke-width="1.4"/><path d="M8,2 h4 M10,2 v6" stroke="#111" stroke-width="1.3"/><path d="M2,11 L8,8 H16 V14 L10,17 H2Z" fill="#3a80e0"/><path d="M2,11 L8,8 H16 L10,11Z" fill="#a0d0ff"/><rect x="6" y="5" width="5" height="5" fill="#80b8f0"/></svg>
<div class="a t" style="left:117px;top:339px;font-size:12px;color:#000">体<span style="font-size:11px;margin-left:7px;letter-spacing:1px">(2)</span></div>
<div class="a" style="left:73px;top:365px;width:10px;height:1px;border-top:1px dotted #808080"></div>
<div class="a" style="left:84px;top:359px;width:13px;height:12px;background:#fff;border:1.5px solid #111"></div>
<svg class="a" style="left:85px;top:360px" width="11" height="10" viewBox="0 0 11 10"><path d="M1.5,5 L4.5,8.5 L10,1.5" stroke="#20c020" stroke-width="2.6" fill="none"/></svg>
<svg class="a" style="left:97px;top:357px" width="17" height="17" viewBox="0 0 17 17"><circle cx="5" cy="5" r="4" fill="none" stroke="#e02030" stroke-width="1.6"/><path d="M2,8 L8,2" stroke="#e02030" stroke-width="1.4"/><path d="M8,2 h4 M10,2 v6" stroke="#111" stroke-width="1.3"/><path d="M2,11 L8,8 H16 V14 L10,17 H2Z" fill="#3a80e0"/><path d="M2,11 L8,8 H16 L10,11Z" fill="#a0d0ff"/><rect x="6" y="5" width="5" height="5" fill="#80b8f0"/></svg>
<div class="a t" style="left:117px;top:359px;font-size:12px;color:#000">体<span style="font-size:11px;margin-left:7px;letter-spacing:1px">(3)</span></div>
<div class="a" style="left:73px;top:385px;width:10px;height:1px;border-top:1px dotted #808080"></div>
<div class="a" style="left:84px;top:379px;width:13px;height:12px;background:#fff;border:1.5px solid #111"></div>
<svg class="a" style="left:85px;top:380px" width="11" height="10" viewBox="0 0 11 10"><path d="M1.5,5 L4.5,8.5 L10,1.5" stroke="#20c020" stroke-width="2.6" fill="none"/></svg>
<svg class="a" style="left:97px;top:377px" width="17" height="17" viewBox="0 0 17 17"><circle cx="5" cy="5" r="4" fill="none" stroke="#e02030" stroke-width="1.6"/><path d="M2,8 L8,2" stroke="#e02030" stroke-width="1.4"/><path d="M8,2 h4 M10,2 v6" stroke="#111" stroke-width="1.3"/><path d="M2,11 L8,8 H16 V14 L10,17 H2Z" fill="#3a80e0"/><path d="M2,11 L8,8 H16 L10,11Z" fill="#a0d0ff"/><rect x="6" y="5" width="5" height="5" fill="#80b8f0"/></svg>
<div class="a t" style="left:117px;top:379px;font-size:12px;color:#000">体<span style="font-size:11px;margin-left:7px;letter-spacing:1px">(4)</span></div>
<div class="a" style="left:73px;top:405px;width:10px;height:1px;border-top:1px dotted #808080"></div>
<div class="a" style="left:84px;top:399px;width:13px;height:12px;background:#fff;border:1.5px solid #111"></div>
<svg class="a" style="left:85px;top:400px" width="11" height="10" viewBox="0 0 11 10"><path d="M1.5,5 L4.5,8.5 L10,1.5" stroke="#20c020" stroke-width="2.6" fill="none"/></svg>
<svg class="a" style="left:97px;top:397px" width="17" height="17" viewBox="0 0 17 17"><circle cx="5" cy="5" r="4" fill="none" stroke="#e02030" stroke-width="1.6"/><path d="M2,8 L8,2" stroke="#e02030" stroke-width="1.4"/><path d="M8,2 h4 M10,2 v6" stroke="#111" stroke-width="1.3"/><path d="M2,11 L8,8 H16 V14 L10,17 H2Z" fill="#3a80e0"/><path d="M2,11 L8,8 H16 L10,11Z" fill="#a0d0ff"/><rect x="6" y="5" width="5" height="5" fill="#80b8f0"/></svg>
<div class="a t" style="left:117px;top:399px;font-size:12px;color:#000">体<span style="font-size:11px;margin-left:7px;letter-spacing:1px">(5)</span></div>
<div class="a" style="left:73px;top:425px;width:10px;height:1px;border-top:1px dotted #808080"></div>
<div class="a" style="left:84px;top:419px;width:13px;height:12px;background:#fff;border:1.5px solid #111"></div>
<svg class="a" style="left:85px;top:420px" width="11" height="10" viewBox="0 0 11 10"><path d="M1.5,5 L4.5,8.5 L10,1.5" stroke="#20c020" stroke-width="2.6" fill="none"/></svg>
<svg class="a" style="left:97px;top:417px" width="17" height="17" viewBox="0 0 17 17"><path d="M2,5 L8,2 L15,4 V13 L9,16 L2,14Z" fill="#5080e0"/><path d="M2,5 L8,2 L15,4 L9,7Z" fill="#c8e0ff"/><path d="M9,7 L15,4 V13 L9,16Z" fill="#3060c0"/><path d="M2,5 L9,7 V16 L2,14Z" fill="#90b8f8"/></svg>
<div class="a t" style="left:117px;top:419px;font-size:12px;color:#000">块<span style="font-size:11px;margin-left:7px;letter-spacing:1px">(6)</span></div>
<div class="a" style="left:73px;top:445px;width:10px;height:1px;border-top:1px dotted #808080"></div>
<div class="a" style="left:84px;top:439px;width:13px;height:12px;background:#fff;border:1.5px solid #111"></div>
<svg class="a" style="left:85px;top:440px" width="11" height="10" viewBox="0 0 11 10"><path d="M1.5,5 L4.5,8.5 L10,1.5" stroke="#20c020" stroke-width="2.6" fill="none"/></svg>
<svg class="a" style="left:97px;top:437px" width="17" height="17" viewBox="0 0 17 17"><path d="M2,5 L8,2 L15,4 V13 L9,16 L2,14Z" fill="#5080e0"/><path d="M2,5 L8,2 L15,4 L9,7Z" fill="#c8e0ff"/><path d="M9,7 L15,4 V13 L9,16Z" fill="#3060c0"/><path d="M2,5 L9,7 V16 L2,14Z" fill="#90b8f8"/></svg>
<div class="a t" style="left:117px;top:439px;font-size:12px;color:#000">块<span style="font-size:11px;margin-left:7px;letter-spacing:1px">(7)</span></div>
<div class="a" style="left:73px;top:465px;width:10px;height:1px;border-top:1px dotted #808080"></div>
<div class="a" style="left:84px;top:459px;width:13px;height:12px;background:#fff;border:1.5px solid #111"></div>
<svg class="a" style="left:85px;top:460px" width="11" height="10" viewBox="0 0 11 10"><path d="M1.5,5 L4.5,8.5 L10,1.5" stroke="#20c020" stroke-width="2.6" fill="none"/></svg>
<svg class="a" style="left:97px;top:457px" width="17" height="17" viewBox="0 0 17 17"><path d="M2,5 L8,2 L15,4 V13 L9,16 L2,14Z" fill="#5080e0"/><path d="M2,5 L8,2 L15,4 L9,7Z" fill="#c8e0ff"/><path d="M9,7 L15,4 V13 L9,16Z" fill="#3060c0"/><path d="M2,5 L9,7 V16 L2,14Z" fill="#90b8f8"/></svg>
<div class="a t" style="left:117px;top:459px;font-size:12px;color:#000">块<span style="font-size:11px;margin-left:7px;letter-spacing:1px">(8)</span></div>
<div class="a" style="left:73px;top:485px;width:10px;height:1px;border-top:1px dotted #808080"></div>
<div class="a" style="left:84px;top:479px;width:13px;height:12px;background:#fff;border:1.5px solid #111"></div>
<svg class="a" style="left:85px;top:480px" width="11" height="10" viewBox="0 0 11 10"><path d="M1.5,5 L4.5,8.5 L10,1.5" stroke="#20c020" stroke-width="2.6" fill="none"/></svg>
<svg class="a" style="left:97px;top:477px" width="17" height="17" viewBox="0 0 17 17"><path d="M1,2 h5" stroke="#e02020" stroke-width="1.3"/><rect x="2" y="7" width="8" height="9" fill="#30a080" stroke="#111" stroke-width="1"/><circle cx="11" cy="7" r="4.5" fill="none" stroke="#111" stroke-width="1.2"/></svg>
<div class="a t" style="left:117px;top:479px;font-size:12px;color:#000">求差<span style="font-size:11px;margin-left:7px;letter-spacing:1px">(9)</span></div>
<div class="a" style="left:73px;top:505px;width:10px;height:1px;border-top:1px dotted #808080"></div>
<div class="a" style="left:84px;top:499px;width:13px;height:12px;background:#fff;border:1.5px solid #111"></div>
<svg class="a" style="left:85px;top:500px" width="11" height="10" viewBox="0 0 11 10"><path d="M1.5,5 L4.5,8.5 L10,1.5" stroke="#20c020" stroke-width="2.6" fill="none"/></svg>
<svg class="a" style="left:97px;top:497px" width="17" height="17" viewBox="0 0 17 17"><path d="M1,2 h5" stroke="#e02020" stroke-width="1.3"/><rect x="2" y="7" width="8" height="9" fill="#30a080" stroke="#111" stroke-width="1"/><circle cx="11" cy="7" r="4.5" fill="none" stroke="#111" stroke-width="1.2"/></svg>
<div class="a t" style="left:117px;top:499px;font-size:12px;color:#000">求差<span style="font-size:11px;margin-left:7px;letter-spacing:1px">(10)</span></div>
<div class="a" style="left:73px;top:525px;width:10px;height:1px;border-top:1px dotted #808080"></div>
<div class="a" style="left:84px;top:519px;width:13px;height:12px;background:#fff;border:1.5px solid #111"></div>
<svg class="a" style="left:85px;top:520px" width="11" height="10" viewBox="0 0 11 10"><path d="M1.5,5 L4.5,8.5 L10,1.5" stroke="#20c020" stroke-width="2.6" fill="none"/></svg>
<svg class="a" style="left:97px;top:517px" width="17" height="17" viewBox="0 0 17 17"><rect x="3" y="2" width="11" height="14" rx="5" ry="3" fill="#8898e8" stroke="#4a5ab8" stroke-width="0.8"/><ellipse cx="8.5" cy="4.5" rx="5.5" ry="2.5" fill="#c8d0ff" stroke="#4a5ab8" stroke-width="0.8"/><rect x="5" y="6" width="3" height="9" fill="#b0c0ff"/></svg>
<div class="a t" style="left:117px;top:519px;font-size:12px;color:#000">圆柱<span style="font-size:11px;margin-left:7px;letter-spacing:1px">(11)</span></div>
<div class="a" style="left:73px;top:545px;width:10px;height:1px;border-top:1px dotted #808080"></div>
<div class="a" style="left:84px;top:539px;width:13px;height:12px;background:#fff;border:1.5px solid #111"></div>
<svg class="a" style="left:85px;top:540px" width="11" height="10" viewBox="0 0 11 10"><path d="M1.5,5 L4.5,8.5 L10,1.5" stroke="#20c020" stroke-width="2.6" fill="none"/></svg>
<svg class="a" style="left:97px;top:537px" width="17" height="17" viewBox="0 0 17 17"><rect x="3" y="2" width="11" height="14" rx="5" ry="3" fill="#8898e8" stroke="#4a5ab8" stroke-width="0.8"/><ellipse cx="8.5" cy="4.5" rx="5.5" ry="2.5" fill="#c8d0ff" stroke="#4a5ab8" stroke-width="0.8"/><rect x="5" y="6" width="3" height="9" fill="#b0c0ff"/></svg>
<div class="a t" style="left:117px;top:539px;font-size:12px;color:#000">圆柱<span style="font-size:11px;margin-left:7px;letter-spacing:1px">(12)</span></div>
<div class="a" style="left:73px;top:565px;width:10px;height:1px;border-top:1px dotted #808080"></div>
<div class="a" style="left:84px;top:559px;width:13px;height:12px;background:#fff;border:1.5px solid #111"></div>
<svg class="a" style="left:85px;top:560px" width="11" height="10" viewBox="0 0 11 10"><path d="M1.5,5 L4.5,8.5 L10,1.5" stroke="#20c020" stroke-width="2.6" fill="none"/></svg>
<svg class="a" style="left:97px;top:557px" width="17" height="17" viewBox="0 0 17 17"><path d="M1,3 h5 M3.5,0.5 v5" stroke="#e02020" stroke-width="1.3"/><rect x="2" y="7" width="8" height="9" fill="#30a080" stroke="#111" stroke-width="1"/><circle cx="11" cy="7" r="4.5" fill="#30a080" stroke="#111" stroke-width="1.2"/></svg>
<div class="a t" style="left:117px;top:559px;font-size:12px;color:#000">求和<span style="font-size:11px;margin-left:7px;letter-spacing:1px">(13)</span></div>
<div class="a" style="left:73px;top:585px;width:10px;height:1px;border-top:1px dotted #808080"></div>
<div class="a" style="left:84px;top:579px;width:13px;height:12px;background:#fff;border:1.5px solid #111"></div>
<svg class="a" style="left:85px;top:580px" width="11" height="10" viewBox="0 0 11 10"><path d="M1.5,5 L4.5,8.5 L10,1.5" stroke="#20c020" stroke-width="2.6" fill="none"/></svg>
<svg class="a" style="left:97px;top:577px" width="17" height="17" viewBox="0 0 17 17"><rect x="3" y="2" width="11" height="14" rx="5" ry="3" fill="#8898e8" stroke="#4a5ab8" stroke-width="0.8"/><ellipse cx="8.5" cy="4.5" rx="5.5" ry="2.5" fill="#c8d0ff" stroke="#4a5ab8" stroke-width="0.8"/><rect x="5" y="6" width="3" height="9" fill="#b0c0ff"/></svg>
<div class="a t" style="left:117px;top:579px;font-size:12px;color:#000">圆柱<span style="font-size:11px;margin-left:7px;letter-spacing:1px">(14)</span></div>
<div class="a" style="left:73px;top:605px;width:10px;height:1px;border-top:1px dotted #808080"></div>
<div class="a" style="left:84px;top:599px;width:13px;height:12px;background:#fff;border:1.5px solid #111"></div>
<svg class="a" style="left:85px;top:600px" width="11" height="10" viewBox="0 0 11 10"><path d="M1.5,5 L4.5,8.5 L10,1.5" stroke="#20c020" stroke-width="2.6" fill="none"/></svg>
<svg class="a" style="left:97px;top:597px" width="17" height="17" viewBox="0 0 17 17"><rect x="3" y="2" width="11" height="14" rx="5" ry="3" fill="#8898e8" stroke="#4a5ab8" stroke-width="0.8"/><ellipse cx="8.5" cy="4.5" rx="5.5" ry="2.5" fill="#c8d0ff" stroke="#4a5ab8" stroke-width="0.8"/><rect x="5" y="6" width="3" height="9" fill="#b0c0ff"/></svg>
<div class="a t" style="left:117px;top:599px;font-size:12px;color:#000">圆柱<span style="font-size:11px;margin-left:7px;letter-spacing:1px">(15)</span></div>
<div class="a" style="left:73px;top:625px;width:10px;height:1px;border-top:1px dotted #808080"></div>
<div class="a" style="left:84px;top:619px;width:13px;height:12px;background:#fff;border:1.5px solid #111"></div>
<svg class="a" style="left:85px;top:620px" width="11" height="10" viewBox="0 0 11 10"><path d="M1.5,5 L4.5,8.5 L10,1.5" stroke="#20c020" stroke-width="2.6" fill="none"/></svg>
<svg class="a" style="left:97px;top:617px" width="17" height="17" viewBox="0 0 17 17"><rect x="3" y="2" width="11" height="14" rx="5" ry="3" fill="#8898e8" stroke="#4a5ab8" stroke-width="0.8"/><ellipse cx="8.5" cy="4.5" rx="5.5" ry="2.5" fill="#c8d0ff" stroke="#4a5ab8" stroke-width="0.8"/><rect x="5" y="6" width="3" height="9" fill="#b0c0ff"/></svg>
<div class="a t" style="left:117px;top:619px;font-size:12px;color:#000">圆柱<span style="font-size:11px;margin-left:7px;letter-spacing:1px">(16)</span></div>
<div class="a" style="left:73px;top:645px;width:10px;height:1px;border-top:1px dotted #808080"></div>
<div class="a" style="left:84px;top:639px;width:13px;height:12px;background:#fff;border:1.5px solid #111"></div>
<svg class="a" style="left:85px;top:640px" width="11" height="10" viewBox="0 0 11 10"><path d="M1.5,5 L4.5,8.5 L10,1.5" stroke="#20c020" stroke-width="2.6" fill="none"/></svg>
<svg class="a" style="left:97px;top:637px" width="17" height="17" viewBox="0 0 17 17"><path d="M1,3 h5 M3.5,0.5 v5" stroke="#e02020" stroke-width="1.3"/><rect x="2" y="7" width="8" height="9" fill="#30a080" stroke="#111" stroke-width="1"/><circle cx="11" cy="7" r="4.5" fill="#30a080" stroke="#111" stroke-width="1.2"/></svg>
<div class="a t" style="left:117px;top:639px;font-size:12px;color:#000">求和<span style="font-size:11px;margin-left:7px;letter-spacing:1px">(17)</span></div>
<div class="a" style="left:73px;top:665px;width:10px;height:1px;border-top:1px dotted #808080"></div>
<div class="a" style="left:84px;top:659px;width:13px;height:12px;background:#fff;border:1.5px solid #111"></div>
<svg class="a" style="left:85px;top:660px" width="11" height="10" viewBox="0 0 11 10"><path d="M1.5,5 L4.5,8.5 L10,1.5" stroke="#20c020" stroke-width="2.6" fill="none"/></svg>
<svg class="a" style="left:97px;top:657px" width="17" height="17" viewBox="0 0 17 17"><path d="M1,2 h5" stroke="#e02020" stroke-width="1.3"/><rect x="2" y="7" width="8" height="9" fill="#30a080" stroke="#111" stroke-width="1"/><circle cx="11" cy="7" r="4.5" fill="none" stroke="#111" stroke-width="1.2"/></svg>
<div class="a t" style="left:117px;top:659px;font-size:12px;color:#000">求差<span style="font-size:11px;margin-left:7px;letter-spacing:1px">(18)</span></div>
<div class="a" style="left:73px;top:685px;width:10px;height:1px;border-top:1px dotted #808080"></div>
<div class="a" style="left:84px;top:679px;width:13px;height:12px;background:#fff;border:1.5px solid #111"></div>
<svg class="a" style="left:85px;top:680px" width="11" height="10" viewBox="0 0 11 10"><path d="M1.5,5 L4.5,8.5 L10,1.5" stroke="#20c020" stroke-width="2.6" fill="none"/></svg>
<svg class="a" style="left:97px;top:677px" width="17" height="17" viewBox="0 0 17 17"><path d="M1,5 L8,2 L16,4 V13 L9,16 L1,14Z" fill="#3a70d0"/><path d="M1,5 L8,2 L16,4 L9,7Z" fill="#f8d0a0"/><path d="M1,5 L9,7 V12 L1,10Z" fill="#e05050"/><path d="M1,10 L9,12 V16 L1,14Z" fill="#fff"/><path d="M3,6 L10,8 L14,5" stroke="#f0a030" stroke-width="1.5" fill="none"/></svg>
<div class="a t" style="left:117px;top:679px;font-size:12px;color:#000">边倒圆<span style="font-size:11px;margin-left:7px;letter-spacing:1px">(19)</span></div>
<div class="a" style="left:73px;top:705px;width:10px;height:1px;border-top:1px dotted #808080"></div>
<div class="a" style="left:84px;top:699px;width:13px;height:12px;background:#fff;border:1.5px solid #111"></div>
<svg class="a" style="left:85px;top:700px" width="11" height="10" viewBox="0 0 11 10"><path d="M1.5,5 L4.5,8.5 L10,1.5" stroke="#20c020" stroke-width="2.6" fill="none"/></svg>
<svg class="a" style="left:97px;top:697px" width="17" height="17" viewBox="0 0 17 17"><path d="M1,5 L8,2 L16,4 V13 L9,16 L1,14Z" fill="#3a70d0"/><path d="M1,5 L8,2 L16,4 L9,7Z" fill="#f8d0a0"/><path d="M1,5 L9,7 V12 L1,10Z" fill="#e05050"/><path d="M1,10 L9,12 V16 L1,14Z" fill="#fff"/><path d="M3,6 L10,8 L14,5" stroke="#f0a030" stroke-width="1.5" fill="none"/></svg>
<div class="a t" style="left:117px;top:699px;font-size:12px;color:#000">边倒圆<span style="font-size:11px;margin-left:7px;letter-spacing:1px">(20)</span></div>
<div class="a" style="left:73px;top:725px;width:10px;height:1px;border-top:1px dotted #808080"></div>
<div class="a" style="left:84px;top:719px;width:13px;height:12px;background:#fff;border:1.5px solid #111"></div>
<svg class="a" style="left:85px;top:720px" width="11" height="10" viewBox="0 0 11 10"><path d="M1.5,5 L4.5,8.5 L10,1.5" stroke="#20c020" stroke-width="2.6" fill="none"/></svg>
<svg class="a" style="left:97px;top:717px" width="17" height="17" viewBox="0 0 17 17"><circle cx="5" cy="5" r="4" fill="none" stroke="#e02030" stroke-width="1.6"/><path d="M2,8 L8,2" stroke="#e02030" stroke-width="1.4"/><path d="M8,2 h4 M10,2 v6" stroke="#111" stroke-width="1.3"/><path d="M2,11 L8,8 H16 V14 L10,17 H2Z" fill="#3a80e0"/><path d="M2,11 L8,8 H16 L10,11Z" fill="#a0d0ff"/><rect x="6" y="5" width="5" height="5" fill="#80b8f0"/></svg>
<div class="a t" style="left:117px;top:719px;font-size:12px;color:#000">体<span style="font-size:11px;margin-left:7px;letter-spacing:1px">(21)</span></div>
<div class="a" style="left:73px;top:745px;width:10px;height:1px;border-top:1px dotted #808080"></div>
<div class="a" style="left:84px;top:739px;width:13px;height:12px;background:#fff;border:1.5px solid #111"></div>
<svg class="a" style="left:85px;top:740px" width="11" height="10" viewBox="0 0 11 10"><path d="M1.5,5 L4.5,8.5 L10,1.5" stroke="#20c020" stroke-width="2.6" fill="none"/></svg>
<svg class="a" style="left:97px;top:737px" width="17" height="17" viewBox="0 0 17 17"><circle cx="5" cy="5" r="4" fill="none" stroke="#e02030" stroke-width="1.6"/><path d="M2,8 L8,2" stroke="#e02030" stroke-width="1.4"/><path d="M8,2 h4 M10,2 v6" stroke="#111" stroke-width="1.3"/><path d="M2,11 L8,8 H16 V14 L10,17 H2Z" fill="#3a80e0"/><path d="M2,11 L8,8 H16 L10,11Z" fill="#a0d0ff"/><rect x="6" y="5" width="5" height="5" fill="#80b8f0"/></svg>
<div class="a t" style="left:117px;top:739px;font-size:12px;color:#000">体<span style="font-size:11px;margin-left:7px;letter-spacing:1px">(22)</span></div>
<div class="a" style="left:73px;top:765px;width:10px;height:1px;border-top:1px dotted #808080"></div>
<div class="a" style="left:84px;top:759px;width:13px;height:12px;background:#fff;border:1.5px solid #111"></div>
<svg class="a" style="left:85px;top:760px" width="11" height="10" viewBox="0 0 11 10"><path d="M1.5,5 L4.5,8.5 L10,1.5" stroke="#20c020" stroke-width="2.6" fill="none"/></svg>
<svg class="a" style="left:97px;top:757px" width="17" height="17" viewBox="0 0 17 17"><circle cx="5" cy="5" r="4" fill="none" stroke="#e02030" stroke-width="1.6"/><path d="M2,8 L8,2" stroke="#e02030" stroke-width="1.4"/><path d="M8,2 h4 M10,2 v6" stroke="#111" stroke-width="1.3"/><path d="M2,11 L8,8 H16 V14 L10,17 H2Z" fill="#3a80e0"/><path d="M2,11 L8,8 H16 L10,11Z" fill="#a0d0ff"/><rect x="6" y="5" width="5" height="5" fill="#80b8f0"/></svg>
<div class="a t" style="left:117px;top:759px;font-size:12px;color:#000">体<span style="font-size:11px;margin-left:7px;letter-spacing:1px">(23)</span></div>
<div class="a" style="left:73px;top:785px;width:10px;height:1px;border-top:1px dotted #808080"></div>
<div class="a" style="left:84px;top:779px;width:13px;height:12px;background:#fff;border:1.5px solid #111"></div>
<svg class="a" style="left:85px;top:780px" width="11" height="10" viewBox="0 0 11 10"><path d="M1.5,5 L4.5,8.5 L10,1.5" stroke="#20c020" stroke-width="2.6" fill="none"/></svg>
<svg class="a" style="left:97px;top:777px" width="17" height="17" viewBox="0 0 17 17"><circle cx="5" cy="5" r="4" fill="none" stroke="#e02030" stroke-width="1.6"/><path d="M2,8 L8,2" stroke="#e02030" stroke-width="1.4"/><path d="M8,2 h4 M10,2 v6" stroke="#111" stroke-width="1.3"/><path d="M2,11 L8,8 H16 V14 L10,17 H2Z" fill="#3a80e0"/><path d="M2,11 L8,8 H16 L10,11Z" fill="#a0d0ff"/><rect x="6" y="5" width="5" height="5" fill="#80b8f0"/></svg>
<div class="a t" style="left:117px;top:779px;font-size:12px;color:#000">体<span style="font-size:11px;margin-left:7px;letter-spacing:1px">(24)</span></div>
<div class="a" style="left:302px;top:275px;width:17px;height:520px;background:#f2f2f2"></div>
<svg class="a" style="left:305px;top:281px" width="10" height="6" viewBox="0 0 10 6"><path d="M0,6 L5,0 L10,6Z" fill="#222"/></svg>
<div class="a" style="left:303px;top:297px;width:14px;height:15px;background:linear-gradient(90deg,#fbfbfb,#e0e0e0);border:1px solid #b8b8b8;border-radius:3px"></div>
<svg class="a" style="left:305px;top:784px" width="10" height="5" viewBox="0 0 10 5"><path d="M0,0 L10,0 L5,5Z" fill="#222"/></svg>
<div class="a" style="left:43px;top:795px;width:276px;height:18px;background:#f2f2f2;border-top:1px solid #e0e0e0"></div>
<svg class="a" style="left:49px;top:799px" width="6" height="9" viewBox="0 0 6 9"><path d="M6,0 L0,4.5 L6,9Z" fill="#333"/></svg>
<svg class="a" style="left:289px;top:799px" width="6" height="9" viewBox="0 0 6 9"><path d="M0,0 L6,4.5 L0,9Z" fill="#222"/></svg>
<div class="a" style="left:63px;top:797px;width:187px;height:14px;background:linear-gradient(#fafafa,#dcdcdc 60%,#cfcfcf);border:1px solid #a8a8a8;border-radius:3px"></div>
<svg class="a" style="left:152px;top:800px" width="9" height="8" viewBox="0 0 9 8"><path d="M1,0 V8 M4,0 V8 M7,0 V8" stroke="#555" stroke-width="1"/></svg>
<div class="a" style="left:42px;top:819px;width:109px;height:1px;background:#b8b8b8"></div>
<div class="a" style="left:210px;top:819px;width:109px;height:1px;background:#b8b8b8"></div>
<div class="a" style="left:156px;top:817px;width:50px;height:5px;background:#c8c8c8;border-radius:1px"></div>
<div class="a" style="left:0;top:832px;width:1276px;height:26px;background:#dddddd"></div>
<div class="a" style="left:0;top:831px;width:331px;height:1px;background:#7a7a7a"></div>
<div class="a" style="left:331px;top:832px;width:945px;height:1px;background:#f4f4f4"></div>
<svg class="a" style="left:4px;top:836px" width="3" height="22" viewBox="0 0 3 22"><rect x="0" y="0" width="2" height="2" fill="#9a9a9a"/><rect x="1" y="1" width="2" height="2" fill="#fff"/><rect x="0" y="4" width="2" height="2" fill="#9a9a9a"/><rect x="1" y="5" width="2" height="2" fill="#fff"/><rect x="0" y="8" width="2" height="2" fill="#9a9a9a"/><rect x="1" y="9" width="2" height="2" fill="#fff"/><rect x="0" y="12" width="2" height="2" fill="#9a9a9a"/><rect x="1" y="13" width="2" height="2" fill="#fff"/><rect x="0" y="16" width="2" height="2" fill="#9a9a9a"/><rect x="1" y="17" width="2" height="2" fill="#fff"/></svg>
<svg class="a" style="left:12px;top:839px" width="21" height="19" viewBox="0 0 21 19"><rect x="0" y="0" width="21" height="19" fill="#9a9aa0"/><path d="M6,12 l5,-5 l5,5 l-5,3z" fill="#aaa"/></svg>
<svg class="a" style="left:42px;top:839px" width="24" height="19" viewBox="0 0 24 19"><path d="M1,5.5 L5.5,1 L10,5.5 L5.5,9.549999999999999Z" fill="#fff8b0" stroke="#b08810" stroke-width="0.6"/><path d="M1,5.5 L5.5,9.549999999999999 L5.5,16.299999999999997 L1,12.25Z" fill="#f8d840" stroke="#b08810" stroke-width="0.6"/><path d="M5.5,9.549999999999999 L10,5.5 L10,12.25 L5.5,16.299999999999997Z" fill="#e0a820" stroke="#b08810" stroke-width="0.6"/><path d="M1,14.5 L5.5,10 L10,14.5 L5.5,18.549999999999997Z" fill="#fff8b0" stroke="#b08810" stroke-width="0.6"/><path d="M1,14.5 L5.5,18.549999999999997 L5.5,25.299999999999997 L1,21.25Z" fill="#f8d840" stroke="#b08810" stroke-width="0.6"/><path d="M5.5,18.549999999999997 L10,14.5 L10,21.25 L5.5,25.299999999999997Z" fill="#e0a820" stroke="#b08810" stroke-width="0.6"/><path d="M9,15.5 L13.5,11 L18,15.5 L13.5,19.549999999999997Z" fill="#fff8b0" stroke="#b08810" stroke-width="0.6"/><path d="M9,15.5 L13.5,19.549999999999997 L13.5,26.299999999999997 L9,22.25Z" fill="#f8d840" stroke="#b08810" stroke-width="0.6"/><path d="M13.5,19.549999999999997 L18,15.5 L18,22.25 L13.5,26.299999999999997Z" fill="#e0a820" stroke="#b08810" stroke-width="0.6"/><path d="M15,6 H23 M19,2 V10" stroke="#2060e0" stroke-width="2"/></svg>
<svg class="a" style="left:74px;top:839px" width="23" height="19" viewBox="0 0 23 19"><path d="M5,9.5 L10.5,4 L16,9.5 L10.5,14.45Z" fill="#fff8b0" stroke="#b08810" stroke-width="0.6"/><path d="M5,9.5 L10.5,14.45 L10.5,22.7 L5,17.75Z" fill="#f8d840" stroke="#b08810" stroke-width="0.6"/><path d="M10.5,14.45 L16,9.5 L16,17.75 L10.5,22.7Z" fill="#e0a820" stroke="#b08810" stroke-width="0.6"/><path d="M15,3 l4,-3 M18,4 l4,-3" stroke="#4080e0" stroke-width="1.5"/><path d="M2,17 l3,2 M1,14 l3,3" stroke="#4080e0" stroke-width="1.5"/></svg>
<svg class="a" style="left:105px;top:839px" width="22" height="19" viewBox="0 0 22 19"><path d="M2,2 L10,7 L2,12Z M20,2 L12,7 L20,12Z" fill="#1020d0"/><path d="M11,0 V19" stroke="#222" stroke-width="1" stroke-dasharray="2,1.5"/><rect x="2" y="13" width="7" height="6" fill="#f8e030" stroke="#806010" stroke-width="0.7"/><path d="M12,13 L19,19 H12Z" fill="#d02010"/></svg>
<div class="a" style="left:134px;top:834px;width:1px;height:24px;background:#b0b0b0;border-right:1px solid #f4f4f4"></div>
<svg class="a" style="left:141px;top:838px" width="23" height="20" viewBox="0 0 23 20"><path d="M3,5.5 L7.5,1 L12,5.5 L7.5,9.549999999999999Z" fill="#fff8b0" stroke="#b08810" stroke-width="0.6"/><path d="M3,5.5 L7.5,9.549999999999999 L7.5,16.299999999999997 L3,12.25Z" fill="#f8d840" stroke="#b08810" stroke-width="0.6"/><path d="M7.5,9.549999999999999 L12,5.5 L12,12.25 L7.5,16.299999999999997Z" fill="#e0a820" stroke="#b08810" stroke-width="0.6"/><path d="M1,15.5 L5.5,11 L10,15.5 L5.5,19.549999999999997Z" fill="#fff8b0" stroke="#b08810" stroke-width="0.6"/><path d="M1,15.5 L5.5,19.549999999999997 L5.5,26.299999999999997 L1,22.25Z" fill="#f8d840" stroke="#b08810" stroke-width="0.6"/><path d="M5.5,19.549999999999997 L10,15.5 L10,22.25 L5.5,26.299999999999997Z" fill="#e0a820" stroke="#b08810" stroke-width="0.6"/><path d="M12,15.5 L16.5,11 L21,15.5 L16.5,19.549999999999997Z" fill="#fff8b0" stroke="#b08810" stroke-width="0.6"/><path d="M12,15.5 L16.5,19.549999999999997 L16.5,26.299999999999997 L12,22.25Z" fill="#f8d840" stroke="#b08810" stroke-width="0.6"/><path d="M16.5,19.549999999999997 L21,15.5 L21,22.25 L16.5,26.299999999999997Z" fill="#e0a820" stroke="#b08810" stroke-width="0.6"/></svg>
<svg class="a" style="left:172px;top:854px" width="7" height="4" viewBox="0 0 7 4"><path d="M0,0 L7,0 L3.5,4 Z" fill="#000"/></svg>
<div class="a" style="left:182px;top:834px;width:1px;height:24px;background:#b0b0b0;border-right:1px solid #f4f4f4"></div>
<div class="a" style="left:331px;top:226px;width:945px;height:606px;background:#000"></div>
<svg class="a" style="left:0;top:0" width="1276" height="858" viewBox="0 0 1276 858">
<g stroke="#000" stroke-width="1.7" stroke-linejoin="round">
<!-- bottom plate -->
<polygon points="552,668 822,512 1055,646 784,801" fill="#fafafa"/>
<polygon points="552,668 784,801 784,822 552,689" fill="#b4b4b4"/>
<polygon points="784,801 1055,646 1055,667 784,822" fill="#d2d2d2"/>
<!-- lower gray block right face -->
<polygon points="765,700 1036,547 1036,634 765,789" fill="#d4d4d4"/>
<!-- ejector recess interior -->
<polygon points="608,600 728,640 728,769 608,700" fill="#e8e8e8" stroke="none"/>
<polygon points="608,666 656,637 728,678 728,731" fill="#dcf8f8" stroke="none"/>
<polygon points="608,600 670,600 656,637 608,665" fill="#d6d6d6" stroke="none"/>
<path d="M608,666 L656,638" stroke="#000" stroke-width="1.5"/>
<polygon points="608,666 728,731 728,745 608,680" fill="#70c4b4"/>
<polygon points="608,680 728,745 728,761 608,697" fill="#8c98a8"/>
<polygon points="608,697 728,761 728,769 608,700" fill="#ffffff" stroke-width="1.2"/>
<g><ellipse cx="643" cy="612" rx="17" ry="5.5" fill="#3434c8" stroke="#101060" stroke-width="1.2"/><ellipse cx="643" cy="617" rx="17" ry="5.5" fill="#3434c8" stroke="#101060" stroke-width="1.2"/><ellipse cx="643" cy="622" rx="17" ry="5.5" fill="#3434c8" stroke="#101060" stroke-width="1.2"/><ellipse cx="643" cy="627" rx="17" ry="5.5" fill="#3434c8" stroke="#101060" stroke-width="1.2"/><ellipse cx="643" cy="632" rx="17" ry="5.5" fill="#3434c8" stroke="#101060" stroke-width="1.2"/><ellipse cx="643" cy="637" rx="17" ry="5.5" fill="#3434c8" stroke="#101060" stroke-width="1.2"/><ellipse cx="643" cy="642" rx="17" ry="5.5" fill="#3434c8" stroke="#101060" stroke-width="1.2"/><ellipse cx="643" cy="647" rx="17" ry="5.5" fill="#3434c8" stroke="#101060" stroke-width="1.2"/><ellipse cx="643" cy="652" rx="17" ry="5.5" fill="#3434c8" stroke="#101060" stroke-width="1.2"/><ellipse cx="643" cy="657" rx="17" ry="5.5" fill="#3434c8" stroke="#101060" stroke-width="1.2"/><ellipse cx="643" cy="662" rx="17" ry="5.5" fill="#3434c8" stroke="#101060" stroke-width="1.2"/><ellipse cx="643" cy="667" rx="17" ry="5.5" fill="#3434c8" stroke="#101060" stroke-width="1.2"/><path d="M627,613 q16,5 32,0" stroke="#7070ff" stroke-width="1.3" fill="none"/><path d="M627,618 q16,5 32,0" stroke="#7070ff" stroke-width="1.3" fill="none"/><path d="M627,623 q16,5 32,0" stroke="#7070ff" stroke-width="1.3" fill="none"/><path d="M627,628 q16,5 32,0" stroke="#7070ff" stroke-width="1.3" fill="none"/><path d="M627,633 q16,5 32,0" stroke="#7070ff" stroke-width="1.3" fill="none"/><path d="M627,638 q16,5 32,0" stroke="#7070ff" stroke-width="1.3" fill="none"/><path d="M627,643 q16,5 32,0" stroke="#7070ff" stroke-width="1.3" fill="none"/><path d="M627,648 q16,5 32,0" stroke="#7070ff" stroke-width="1.3" fill="none"/><path d="M627,653 q16,5 32,0" stroke="#7070ff" stroke-width="1.3" fill="none"/><path d="M627,658 q16,5 32,0" stroke="#7070ff" stroke-width="1.3" fill="none"/><path d="M627,663 q16,5 32,0" stroke="#7070ff" stroke-width="1.3" fill="none"/><ellipse cx="624" cy="666" rx="5" ry="3" fill="#3434c8" stroke="#101060" stroke-width="1"/><ellipse cx="716" cy="664" rx="14" ry="5" fill="#3434c8" stroke="#101060" stroke-width="1.2"/><ellipse cx="716" cy="669" rx="14" ry="5" fill="#3434c8" stroke="#101060" stroke-width="1.2"/><ellipse cx="716" cy="674" rx="14" ry="5" fill="#3434c8" stroke="#101060" stroke-width="1.2"/><ellipse cx="716" cy="679" rx="14" ry="5" fill="#3434c8" stroke="#101060" stroke-width="1.2"/><ellipse cx="716" cy="684" rx="14" ry="5" fill="#3434c8" stroke="#101060" stroke-width="1.2"/><ellipse cx="716" cy="689" rx="14" ry="5" fill="#3434c8" stroke="#101060" stroke-width="1.2"/><ellipse cx="716" cy="694" rx="14" ry="5" fill="#3434c8" stroke="#101060" stroke-width="1.2"/><ellipse cx="716" cy="699" rx="14" ry="5" fill="#3434c8" stroke="#101060" stroke-width="1.2"/><ellipse cx="716" cy="704" rx="14" ry="5" fill="#3434c8" stroke="#101060" stroke-width="1.2"/><ellipse cx="716" cy="709" rx="14" ry="5" fill="#3434c8" stroke="#101060" stroke-width="1.2"/><ellipse cx="716" cy="714" rx="14" ry="5" fill="#3434c8" stroke="#101060" stroke-width="1.2"/><path d="M703,665 q13,4 26,0" stroke="#7070ff" stroke-width="1.3" fill="none"/><path d="M703,670 q13,4 26,0" stroke="#7070ff" stroke-width="1.3" fill="none"/><path d="M703,675 q13,4 26,0" stroke="#7070ff" stroke-width="1.3" fill="none"/><path d="M703,680 q13,4 26,0" stroke="#7070ff" stroke-width="1.3" fill="none"/><path d="M703,685 q13,4 26,0" stroke="#7070ff" stroke-width="1.3" fill="none"/><path d="M703,690 q13,4 26,0" stroke="#7070ff" stroke-width="1.3" fill="none"/><path d="M703,695 q13,4 26,0" stroke="#7070ff" stroke-width="1.3" fill="none"/><path d="M703,700 q13,4 26,0" stroke="#7070ff" stroke-width="1.3" fill="none"/><path d="M703,705 q13,4 26,0" stroke="#7070ff" stroke-width="1.3" fill="none"/><path d="M703,710 q13,4 26,0" stroke="#7070ff" stroke-width="1.3" fill="none"/><path d="M703,715 q13,4 26,0" stroke="#7070ff" stroke-width="1.3" fill="none"/></g>
<!-- left pillar left face -->
<polygon points="571,588 608,609 608,700 571,679" fill="#b8b8b8"/>
<!-- front pillar left face -->
<polygon points="728,678 765,700 765,789 728,769" fill="#b8b8b8"/>
<!-- small white bottom plate visible top at left -->
<!-- yellow -->
<polygon points="571,510 765,620 765,700 571,588" fill="#c4a52c"/>
<polygon points="765,620 1036,466 1036,547 765,700" fill="#d2b22e"/>
<!-- teal -->
<polygon points="571,453 765,565 765,620 571,510" fill="#1b7c7c"/>
<polygon points="765,565 1036,410 1036,466 765,620" fill="#1f8a8a"/>
<!-- tan -->
<polygon points="571,431 765,542 765,565 571,453" fill="#ae9c88"/>
<polygon points="765,542 784,553 765,565" fill="#c8b096"/>
<!-- holes right face -->
<ellipse cx="885" cy="512" rx="4.5" ry="6.5" fill="#7a7a7a" transform="rotate(35 885 512)"/>
<ellipse cx="915" cy="494" rx="4.5" ry="6.5" fill="#7a7a7a" transform="rotate(35 915 494)"/>
<ellipse cx="885" cy="617" rx="4.5" ry="6.5" fill="#7a7a7a" transform="rotate(35 885 617)"/>
<ellipse cx="915" cy="600" rx="4.5" ry="6.5" fill="#7a7a7a" transform="rotate(35 915 600)"/>
<!-- top plate -->
<polygon points="552,390 784,523 784,553 552,420" fill="#b2b2b2"/>
<polygon points="784,523 1055,368 1055,398 784,553" fill="#d4d4d4"/>
<polygon points="822,234 552,390 784,523 1055,368" fill="#ffffff"/>
<!-- blue holes -->
<ellipse cx="842" cy="270" rx="16.5" ry="9" fill="#8080f0" stroke-width="2.2"/>
<ellipse cx="992.5" cy="356" rx="16.5" ry="9" fill="#8080f0" stroke-width="2.2"/>
<ellipse cx="614" cy="401" rx="16.5" ry="9" fill="#8080f0" stroke-width="2.2"/>
<ellipse cx="766" cy="487" rx="16.5" ry="9" fill="#8080f0" stroke-width="2.2"/>
<!-- yellow small -->
<ellipse cx="918.5" cy="312" rx="10" ry="6" fill="#f0f020" stroke-width="2.2"/>
<ellipse cx="918.5" cy="312.5" rx="4.8" ry="3" fill="#8a7a30" stroke-width="1.2"/>
<ellipse cx="687" cy="445" rx="10" ry="6" fill="#f0f020" stroke-width="2.2"/>
<ellipse cx="687" cy="445.5" rx="4.8" ry="3" fill="#8a7a30" stroke-width="1.2"/>
<!-- locating ring -->
<path d="M749,370 L749,379 A54.8,31.5 0 0 0 858.5,379 L858.5,370 Z" fill="#178050" stroke-width="2.2"/>
<ellipse cx="803.7" cy="370" rx="54.8" ry="31.5" fill="#2ec89c" stroke-width="2.4"/>
<ellipse cx="803.5" cy="370" rx="30.4" ry="17.8" fill="#26b088"/>
<ellipse cx="803.7" cy="377" rx="19" ry="10" fill="#b8dc40"/>
<ellipse cx="803" cy="378" rx="9.2" ry="5.4" fill="#c8e850"/>
<circle cx="803.5" cy="378.5" r="2" fill="#000"/>
<ellipse cx="770.5" cy="350.5" rx="5.5" ry="3.5" fill="#222"/>
<ellipse cx="836.5" cy="389" rx="5.5" ry="3.5" fill="#222"/>
<ellipse cx="760.5" cy="402.5" rx="4" ry="2.5" fill="#555"/>
</g>
<!-- parting outline -->
<polygon points="570,501 557,509 571,517" fill="#3a2820"/>
<polygon points="1036,456 1048,464 1036,471" fill="#3a2820"/>
<g stroke="#e4b0a8" stroke-width="2.5" fill="none">
<polyline points="570,501 557,509 765,628 1048,464 1036,456"/>
</g>
<!-- WCS -->
<g>
<path d="M803,440 L805,462 L803,484 L801,462 Z" fill="#3a5ac8"/>
<path d="M807,483 L842,464 L822,478 Z" fill="#90e090"/>
<path d="M807,487 L841,508 L823,493 Z" fill="#e08090"/>
<text x="807" y="441" font-size="12" fill="#3858d8" font-family="Liberation Sans">ZC</text>
<text x="828" y="460" font-size="12" fill="#40a060" font-family="Liberation Sans">YC</text>
<text x="826" y="523" font-size="12" fill="#d04040" font-family="Liberation Sans">XC</text>
<ellipse cx="845" cy="462" rx="35" ry="21.5" fill="none" stroke="#f0a030" stroke-width="4.5"/>
<ellipse cx="844.5" cy="461" rx="27" ry="13" fill="none" stroke="#f0a030" stroke-width="2.5"/>
<ellipse cx="845" cy="495" rx="34" ry="17.5" fill="none" stroke="#f0a030" stroke-width="3.5"/>
</g>
<!-- view triad -->
<g>
<polygon points="397,752 412,759 412,777 399,785 384,777 384,759" fill="#d0d0d0" opacity="0.92"/>
<polygon points="397,752 412,759 399,767 384,759" fill="#dcdcdc" opacity="0.9"/>
<path d="M412,759 L415,756" stroke="#30a030" stroke-width="1.5"/>
<line x1="382" y1="777" x2="382" y2="755" stroke="#2030d0" stroke-width="2.2"/>
<path d="M379.5,758 L382,750 L384.5,758 Z" fill="#2030d0"/>
<text x="378.5" y="750" font-size="10" fill="#4050e0" font-family="Liberation Sans">Z</text>
<line x1="382" y1="778" x2="400" y2="788" stroke="#d03030" stroke-width="2.2"/>
<path d="M398,785 L406,792 L396,790 Z" fill="#d03030"/>
<text x="407" y="799" font-size="10" fill="#d04848" font-family="Liberation Sans">X</text>
<circle cx="381" cy="777.5" r="3.8" fill="#e8e8e8"/>
</g>
</svg>

<div class="a" style="left:-30.5px;top:89.5px;width:51.0px;height:51.0px;border-radius:50%;background:rgba(80,188,240,1)"></div>
<div class="a" style="left:-27.5px;top:175.5px;width:49.0px;height:49.0px;border-radius:50%;background:rgba(80,188,240,1)"></div>
<div class="a" style="left:-26.5px;top:309.5px;width:47.0px;height:47.0px;border-radius:50%;background:rgba(80,188,240,0.88)"></div>
</body></html>
